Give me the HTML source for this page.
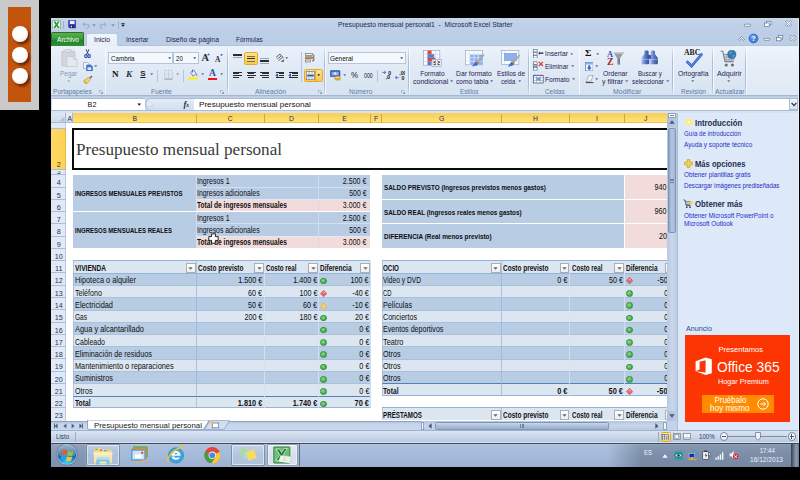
<!DOCTYPE html>
<html><head><meta charset="utf-8"><title>Presupuesto mensual personal1 - Microsoft Excel Starter</title>
<style>
html,body{margin:0;padding:0;background:#000;}
body{width:800px;height:480px;overflow:hidden;position:relative;font-family:"Liberation Sans",sans-serif;}
body div,body span,body svg{position:absolute;box-sizing:border-box;}
body span{white-space:pre;display:block;}
</style></head><body>
<div style="left:0.00px;top:0.00px;width:38.60px;height:110.00px;background:#cacaca"></div>
<div style="left:8.10px;top:7.00px;width:23.00px;height:94.80px;background:#c2540c"></div>
<div style="left:11.65px;top:26.05px;width:15.90px;height:15.90px;border-radius:50%;background:radial-gradient(circle at 42% 36%,#ffffff 0%,#fdfdfd 50%,#e4e4e4 85%,#d2d2d2 100%);box-shadow:2px 2.4px 2.4px rgba(50,10,0,.62)"></div>
<div style="left:11.65px;top:46.95px;width:15.90px;height:15.90px;border-radius:50%;background:radial-gradient(circle at 42% 36%,#ffffff 0%,#fdfdfd 50%,#e4e4e4 85%,#d2d2d2 100%);box-shadow:2px 2.4px 2.4px rgba(50,10,0,.62)"></div>
<div style="left:11.65px;top:67.85px;width:15.90px;height:15.90px;border-radius:50%;background:radial-gradient(circle at 42% 36%,#ffffff 0%,#fdfdfd 50%,#e4e4e4 85%,#d2d2d2 100%);box-shadow:2px 2.4px 2.4px rgba(50,10,0,.62)"></div>
<div style="left:51.00px;top:17.60px;width:749.00px;height:425.00px;background:#bfd0e8"></div>
<div style="left:51.00px;top:17.60px;width:749.00px;height:14.40px;background:linear-gradient(#c6d6ec,#bfd0e8 40%,#bdcee7)"></div>
<span style='left:337.50px;top:21.35px;font:7.30px/7.30px "Liberation Sans",sans-serif;color:#1e2a4a;transform:scaleX(0.9249);transform-origin:0 50%;'>Presupuesto mensual personal1  -  Microsoft Excel Starter</span>
<div style="left:51.00px;top:32.00px;width:749.00px;height:13.60px;background:#bccde6"></div>
<div style="left:51.00px;top:45.40px;width:749.00px;height:51.00px;background:linear-gradient(#ecf2fa 0%,#e3ecf7 30%,#dbe6f3 75%,#d8e3f1 100%);border-top:1px solid #b3c5de;border-bottom:1px solid #a3b6d2"></div>
<div style="left:51.00px;top:95.80px;width:749.00px;height:17.20px;background:#c9d9ee"></div>
<div style="left:51.00px;top:96.40px;width:749.00px;height:2.60px;background:linear-gradient(#b9c9e0,#ccd9ec)"></div>
<div style="left:52.00px;top:98.20px;width:93.00px;height:11.80px;background:#fff;border-top:0.8px solid #a8bcd8"></div>
<span style='left:87.60px;top:100.70px;font:7.20px/7.20px "Liberation Sans",sans-serif;color:#111;transform:scaleX(1.0000);transform-origin:50% 50%;'>B2</span>
<svg style="left:136.6px;top:103px" width="4.5" height="3" viewBox="0 0 6 4"><path d="M0.5 0.5h5L3 3.5z" fill="#111"/></svg>
<div style="left:145.00px;top:98.20px;width:49.00px;height:11.80px;background:linear-gradient(#e4ecf7,#d2dff0);border-top:1px solid #a8bcd8;border-left:1px solid #9db2d0;border-radius:6px 0 0 6px"></div>
<div style="left:148.00px;top:101.60px;width:5.00px;height:5.00px;border-radius:50%;background:radial-gradient(circle at 40% 40%,#f4f7fb,#b9c6da)"></div>
<span style='left:183.50px;top:99.90px;font:italic bold 8.60px/8.60px "Liberation Serif",serif;color:#1a2a4a;transform:scaleX(1.0000);transform-origin:0 50%;'>f</span>
<span style='left:186.30px;top:102.80px;font:italic bold 5.60px/5.60px "Liberation Serif",serif;color:#1a2a4a;transform:scaleX(1.0000);transform-origin:0 50%;'>x</span>
<div style="left:193.80px;top:98.20px;width:595.30px;height:11.80px;background:#fff;border-top:0.8px solid #a8bcd8"></div>
<span style='left:198.50px;top:100.50px;font:7.40px/7.40px "Liberation Sans",sans-serif;color:#111;transform:scaleX(1.0978);transform-origin:0 50%;'>Presupuesto mensual personal</span>
<div style="left:789.20px;top:98.20px;width:9.30px;height:11.80px;background:linear-gradient(#eef3fa,#d6e2f1);border:1px solid #a8bcd8"></div>
<svg style="left:791.2px;top:102.3px" width="6" height="5" viewBox="0 0 6 5"><path d="M0.6 0.8L3 3.6L5.4 0.8" fill="none" stroke="#333" stroke-width="1.3"/></svg>
<div style="left:51.00px;top:110.00px;width:749.00px;height:3.10px;background:linear-gradient(#a9bbd6 0,#a9bbd6 0.7px,#dbe5f3 0.9px,#d6e1f1 100%)"></div>
<div style="left:51.00px;top:113.00px;width:616.20px;height:307.60px;background:#fff"></div>
<div style="left:66.30px;top:113.00px;width:600.90px;height:9.60px;background:linear-gradient(#f9cf57 0%,#fbd55f 40%,#fde47a 100%);border-bottom:1px solid #f3c24a"></div>
<div style="left:51.00px;top:113.00px;width:15.30px;height:9.60px;background:linear-gradient(#dfe8f4,#cfdcee);border-right:1px solid #a5b9d4;border-bottom:1px solid #a5b9d4"></div>
<svg style="left:58px;top:115.5px" width="7" height="6" viewBox="0 0 7 6"><path d="M6.5 0.5V5.5H0.8z" fill="#b4c3d9"/></svg>
<div style="left:66.30px;top:113.00px;width:6.90px;height:9.60px;background:linear-gradient(#e6edf7,#d5e0f0);border-right:1px solid #a5b9d4;border-bottom:1px solid #a5b9d4"></div>
<span style='left:67.48px;top:115.50px;font:6.80px/6.80px "Liberation Sans",sans-serif;color:#27305a;transform:scaleX(1.0000);transform-origin:50% 50%;'>A</span>
<span style='left:132.46px;top:115.50px;font:6.80px/6.80px "Liberation Sans",sans-serif;color:#27305a;transform:scaleX(1.0000);transform-origin:50% 50%;'>B</span>
<div style="left:195.75px;top:113.50px;width:1.00px;height:9.00px;background:#d8a53a"></div>
<span style='left:227.87px;top:115.50px;font:6.80px/6.80px "Liberation Sans",sans-serif;color:#27305a;transform:scaleX(1.0000);transform-origin:50% 50%;'>C</span>
<div style="left:263.90px;top:113.50px;width:1.00px;height:9.00px;background:#d8a53a"></div>
<span style='left:288.99px;top:115.50px;font:6.80px/6.80px "Liberation Sans",sans-serif;color:#27305a;transform:scaleX(1.0000);transform-origin:50% 50%;'>D</span>
<div style="left:318.00px;top:113.50px;width:1.00px;height:9.00px;background:#d8a53a"></div>
<span style='left:342.18px;top:115.50px;font:6.80px/6.80px "Liberation Sans",sans-serif;color:#27305a;transform:scaleX(1.0000);transform-origin:50% 50%;'>E</span>
<div style="left:369.90px;top:113.50px;width:1.00px;height:9.00px;background:#d8a53a"></div>
<span style='left:374.07px;top:115.50px;font:6.80px/6.80px "Liberation Sans",sans-serif;color:#27305a;transform:scaleX(1.0000);transform-origin:50% 50%;'>F</span>
<div style="left:381.40px;top:113.50px;width:1.00px;height:9.00px;background:#d8a53a"></div>
<span style='left:438.93px;top:115.50px;font:6.80px/6.80px "Liberation Sans",sans-serif;color:#27305a;transform:scaleX(1.0000);transform-origin:50% 50%;'>G</span>
<div style="left:500.75px;top:113.50px;width:1.00px;height:9.00px;background:#d8a53a"></div>
<span style='left:532.97px;top:115.50px;font:6.80px/6.80px "Liberation Sans",sans-serif;color:#27305a;transform:scaleX(1.0000);transform-origin:50% 50%;'>H</span>
<div style="left:569.10px;top:113.50px;width:1.00px;height:9.00px;background:#d8a53a"></div>
<span style='left:596.06px;top:115.50px;font:6.80px/6.80px "Liberation Sans",sans-serif;color:#27305a;transform:scaleX(1.0000);transform-origin:50% 50%;'>I</span>
<div style="left:623.90px;top:113.50px;width:1.00px;height:9.00px;background:#d8a53a"></div>
<span style='left:644.10px;top:115.50px;font:6.80px/6.80px "Liberation Sans",sans-serif;color:#27305a;transform:scaleX(1.0000);transform-origin:50% 50%;'>J</span>
<div style="left:51.00px;top:122.60px;width:15.30px;height:298.00px;background:#e0e9f5;border-right:0.8px solid #bccbe1"></div>
<div style="left:51.00px;top:128.00px;width:15.30px;height:41.00px;background:linear-gradient(90deg,#ffd866,#fdd255);border-right:1px solid #e8b643"></div>
<span style='left:56.80px;top:161.00px;font:7.20px/7.20px "Liberation Sans",sans-serif;color:#3a3320;transform:scaleX(1.0000);transform-origin:50% 50%;'>2</span>
<div style="left:51.00px;top:127.60px;width:15.30px;height:0.80px;background:#aabdd8"></div>
<div style="left:51.00px;top:168.60px;width:15.30px;height:0.80px;background:#aabdd8"></div>
<div style="left:51.00px;top:174.30px;width:15.30px;height:0.80px;background:#aabdd8"></div>
<div style="left:51.00px;top:186.57px;width:15.30px;height:0.80px;background:#aabdd8"></div>
<div style="left:51.00px;top:198.84px;width:15.30px;height:0.80px;background:#aabdd8"></div>
<div style="left:51.00px;top:211.11px;width:15.30px;height:0.80px;background:#aabdd8"></div>
<div style="left:51.00px;top:223.38px;width:15.30px;height:0.80px;background:#aabdd8"></div>
<div style="left:51.00px;top:235.65px;width:15.30px;height:0.80px;background:#aabdd8"></div>
<div style="left:51.00px;top:247.92px;width:15.30px;height:0.80px;background:#aabdd8"></div>
<div style="left:51.00px;top:260.19px;width:15.30px;height:0.80px;background:#aabdd8"></div>
<div style="left:51.00px;top:272.46px;width:15.30px;height:0.80px;background:#aabdd8"></div>
<div style="left:51.00px;top:284.73px;width:15.30px;height:0.80px;background:#aabdd8"></div>
<div style="left:51.00px;top:297.00px;width:15.30px;height:0.80px;background:#aabdd8"></div>
<div style="left:51.00px;top:309.27px;width:15.30px;height:0.80px;background:#aabdd8"></div>
<div style="left:51.00px;top:321.54px;width:15.30px;height:0.80px;background:#aabdd8"></div>
<div style="left:51.00px;top:333.81px;width:15.30px;height:0.80px;background:#aabdd8"></div>
<div style="left:51.00px;top:346.08px;width:15.30px;height:0.80px;background:#aabdd8"></div>
<div style="left:51.00px;top:358.35px;width:15.30px;height:0.80px;background:#aabdd8"></div>
<div style="left:51.00px;top:370.62px;width:15.30px;height:0.80px;background:#aabdd8"></div>
<div style="left:51.00px;top:382.89px;width:15.30px;height:0.80px;background:#aabdd8"></div>
<div style="left:51.00px;top:395.16px;width:15.30px;height:0.80px;background:#aabdd8"></div>
<div style="left:51.00px;top:407.43px;width:15.30px;height:0.80px;background:#aabdd8"></div>
<span style='left:56.80px;top:168.00px;font:7.20px/7.20px "Liberation Sans",sans-serif;color:#23335e;transform:scaleX(1.0000);transform-origin:50% 50%;clip-path:inset(3.2px 0 0 0);'>3</span>
<span style='left:56.80px;top:179.30px;font:7.20px/7.20px "Liberation Sans",sans-serif;color:#23335e;transform:scaleX(1.0000);transform-origin:50% 50%;'>4</span>
<span style='left:56.80px;top:191.57px;font:7.20px/7.20px "Liberation Sans",sans-serif;color:#23335e;transform:scaleX(1.0000);transform-origin:50% 50%;'>5</span>
<span style='left:56.80px;top:203.84px;font:7.20px/7.20px "Liberation Sans",sans-serif;color:#23335e;transform:scaleX(1.0000);transform-origin:50% 50%;'>6</span>
<span style='left:56.80px;top:216.11px;font:7.20px/7.20px "Liberation Sans",sans-serif;color:#23335e;transform:scaleX(1.0000);transform-origin:50% 50%;'>7</span>
<span style='left:56.80px;top:228.38px;font:7.20px/7.20px "Liberation Sans",sans-serif;color:#23335e;transform:scaleX(1.0000);transform-origin:50% 50%;'>8</span>
<span style='left:56.80px;top:240.65px;font:7.20px/7.20px "Liberation Sans",sans-serif;color:#23335e;transform:scaleX(1.0000);transform-origin:50% 50%;'>9</span>
<span style='left:54.80px;top:252.92px;font:7.20px/7.20px "Liberation Sans",sans-serif;color:#23335e;transform:scaleX(1.0000);transform-origin:50% 50%;'>10</span>
<span style='left:55.06px;top:265.19px;font:7.20px/7.20px "Liberation Sans",sans-serif;color:#23335e;transform:scaleX(1.0000);transform-origin:50% 50%;'>11</span>
<span style='left:54.80px;top:277.46px;font:7.20px/7.20px "Liberation Sans",sans-serif;color:#23335e;transform:scaleX(1.0000);transform-origin:50% 50%;'>12</span>
<span style='left:54.80px;top:289.73px;font:7.20px/7.20px "Liberation Sans",sans-serif;color:#23335e;transform:scaleX(1.0000);transform-origin:50% 50%;'>13</span>
<span style='left:54.80px;top:302.00px;font:7.20px/7.20px "Liberation Sans",sans-serif;color:#23335e;transform:scaleX(1.0000);transform-origin:50% 50%;'>14</span>
<span style='left:54.80px;top:314.27px;font:7.20px/7.20px "Liberation Sans",sans-serif;color:#23335e;transform:scaleX(1.0000);transform-origin:50% 50%;'>15</span>
<span style='left:54.80px;top:326.54px;font:7.20px/7.20px "Liberation Sans",sans-serif;color:#23335e;transform:scaleX(1.0000);transform-origin:50% 50%;'>16</span>
<span style='left:54.80px;top:338.81px;font:7.20px/7.20px "Liberation Sans",sans-serif;color:#23335e;transform:scaleX(1.0000);transform-origin:50% 50%;'>17</span>
<span style='left:54.80px;top:351.08px;font:7.20px/7.20px "Liberation Sans",sans-serif;color:#23335e;transform:scaleX(1.0000);transform-origin:50% 50%;'>18</span>
<span style='left:54.80px;top:363.35px;font:7.20px/7.20px "Liberation Sans",sans-serif;color:#23335e;transform:scaleX(1.0000);transform-origin:50% 50%;'>19</span>
<span style='left:54.80px;top:375.62px;font:7.20px/7.20px "Liberation Sans",sans-serif;color:#23335e;transform:scaleX(1.0000);transform-origin:50% 50%;'>20</span>
<span style='left:54.80px;top:387.89px;font:7.20px/7.20px "Liberation Sans",sans-serif;color:#23335e;transform:scaleX(1.0000);transform-origin:50% 50%;'>21</span>
<span style='left:54.80px;top:400.16px;font:7.20px/7.20px "Liberation Sans",sans-serif;color:#23335e;transform:scaleX(1.0000);transform-origin:50% 50%;'>22</span>
<span style='left:54.80px;top:412.43px;font:7.20px/7.20px "Liberation Sans",sans-serif;color:#23335e;transform:scaleX(1.0000);transform-origin:50% 50%;'>23</span>
<div style="left:0;top:0;width:667.2px;height:420.6px;overflow:hidden">
<div style="left:72.20px;top:127.60px;width:598.00px;height:42.10px;background:#fff;border:2.1px solid #0a0a0a;border-right:none"></div>
<span style='left:76.30px;top:141.70px;font:15.80px/15.80px "Liberation Serif",serif;color:#3a3a3a;transform:scaleX(1.0817);transform-origin:0 50%;'>Presupuesto mensual personal</span>
<div style="left:73.20px;top:175.00px;width:297.20px;height:36.01px;background:#b8cce4"></div>
<div style="left:196.25px;top:199.54px;width:174.15px;height:11.37px;background:#f2dcdb"></div>
<div style="left:195.85px;top:175.00px;width:0.80px;height:36.00px;background:#d3def0"></div>
<div style="left:318.10px;top:175.00px;width:0.80px;height:36.00px;background:#cfdbee"></div>
<div style="left:196.25px;top:186.57px;width:174.15px;height:0.80px;background:#d3def0"></div>
<div style="left:196.25px;top:198.84px;width:174.15px;height:0.80px;background:#e4e6f0"></div>
<span style='left:74.60px;top:190.00px;font:bold 7.80px/7.80px "Liberation Sans",sans-serif;color:#0e0e0e;transform:scaleX(0.7735);transform-origin:0 50%;'>INGRESOS MENSUALES PREVISTOS</span>
<span style='left:197.40px;top:177.80px;font:8.20px/8.20px "Liberation Sans",sans-serif;color:#0e0e0e;transform:scaleX(0.8540);transform-origin:0 50%;'>Ingresos 1</span>
<span style='left:197.40px;top:190.07px;font:8.20px/8.20px "Liberation Sans",sans-serif;color:#0e0e0e;transform:scaleX(0.8387);transform-origin:0 50%;'>Ingresos adicionales</span>
<span style='left:197.40px;top:202.34px;font:bold 8.20px/8.20px "Liberation Sans",sans-serif;color:#0e0e0e;transform:scaleX(0.8039);transform-origin:0 50%;'>Total de ingresos mensuales</span>
<span style='left:338.94px;top:177.80px;font:8.20px/8.20px "Liberation Sans",sans-serif;color:#0e0e0e;transform:scaleX(0.8589);transform-origin:100% 50%;'>2.500 €</span>
<span style='left:345.78px;top:190.07px;font:8.20px/8.20px "Liberation Sans",sans-serif;color:#0e0e0e;transform:scaleX(0.8431);transform-origin:100% 50%;'>500 €</span>
<span style='left:338.94px;top:202.34px;font:8.20px/8.20px "Liberation Sans",sans-serif;color:#0e0e0e;transform:scaleX(0.8589);transform-origin:100% 50%;'>3.000 €</span>
<div style="left:73.20px;top:211.81px;width:297.20px;height:36.01px;background:#b8cce4"></div>
<div style="left:196.25px;top:236.35px;width:174.15px;height:11.37px;background:#f2dcdb"></div>
<div style="left:195.85px;top:211.81px;width:0.80px;height:36.00px;background:#d3def0"></div>
<div style="left:318.10px;top:211.81px;width:0.80px;height:36.00px;background:#cfdbee"></div>
<div style="left:196.25px;top:223.38px;width:174.15px;height:0.80px;background:#d3def0"></div>
<div style="left:196.25px;top:235.65px;width:174.15px;height:0.80px;background:#e4e6f0"></div>
<span style='left:74.60px;top:226.81px;font:bold 7.80px/7.80px "Liberation Sans",sans-serif;color:#0e0e0e;transform:scaleX(0.7691);transform-origin:0 50%;'>INGRESOS MENSUALES REALES</span>
<span style='left:197.40px;top:214.61px;font:8.20px/8.20px "Liberation Sans",sans-serif;color:#0e0e0e;transform:scaleX(0.8540);transform-origin:0 50%;'>Ingresos 1</span>
<span style='left:197.40px;top:226.88px;font:8.20px/8.20px "Liberation Sans",sans-serif;color:#0e0e0e;transform:scaleX(0.8387);transform-origin:0 50%;'>Ingresos adicionales</span>
<span style='left:197.40px;top:239.15px;font:bold 8.20px/8.20px "Liberation Sans",sans-serif;color:#0e0e0e;transform:scaleX(0.8039);transform-origin:0 50%;'>Total de ingresos mensuales</span>
<span style='left:338.94px;top:214.61px;font:8.20px/8.20px "Liberation Sans",sans-serif;color:#0e0e0e;transform:scaleX(0.8589);transform-origin:100% 50%;'>2.500 €</span>
<span style='left:345.78px;top:226.88px;font:8.20px/8.20px "Liberation Sans",sans-serif;color:#0e0e0e;transform:scaleX(0.8431);transform-origin:100% 50%;'>500 €</span>
<span style='left:338.94px;top:239.15px;font:8.20px/8.20px "Liberation Sans",sans-serif;color:#0e0e0e;transform:scaleX(0.8589);transform-origin:100% 50%;'>3.000 €</span>
<div style="left:381.90px;top:175.00px;width:242.10px;height:23.74px;background:#b8cce4"></div>
<div style="left:624.80px;top:175.00px;width:50.00px;height:23.74px;background:#f2dcdb"></div>
<span style='left:383.70px;top:183.97px;font:bold 7.80px/7.80px "Liberation Sans",sans-serif;color:#0e0e0e;transform:scaleX(0.8096);transform-origin:0 50%;'>SALDO PREVISTO (Ingresos previstos menos gastos)</span>
<span style='left:652.48px;top:183.77px;font:8.20px/8.20px "Liberation Sans",sans-serif;color:#0e0e0e;transform:scaleX(0.8800);transform-origin:100% 50%;'>940 €</span>
<div style="left:381.90px;top:199.54px;width:242.10px;height:23.74px;background:#b8cce4"></div>
<div style="left:624.80px;top:199.54px;width:50.00px;height:23.74px;background:#f2dcdb"></div>
<span style='left:383.70px;top:208.51px;font:bold 7.80px/7.80px "Liberation Sans",sans-serif;color:#0e0e0e;transform:scaleX(0.8105);transform-origin:0 50%;'>SALDO REAL (Ingresos reales menos gastos)</span>
<span style='left:652.48px;top:208.31px;font:8.20px/8.20px "Liberation Sans",sans-serif;color:#0e0e0e;transform:scaleX(0.8800);transform-origin:100% 50%;'>960 €</span>
<div style="left:381.90px;top:224.08px;width:242.10px;height:23.74px;background:#b8cce4"></div>
<div style="left:624.80px;top:224.08px;width:50.00px;height:23.74px;background:#f2dcdb"></div>
<span style='left:383.70px;top:233.05px;font:bold 7.80px/7.80px "Liberation Sans",sans-serif;color:#0e0e0e;transform:scaleX(0.8219);transform-origin:0 50%;'>DIFERENCIA (Real menos previsto)</span>
<span style='left:657.04px;top:232.85px;font:8.20px/8.20px "Liberation Sans",sans-serif;color:#0e0e0e;transform:scaleX(0.8800);transform-origin:100% 50%;'>20 €</span>
<div style="left:73.20px;top:260.09px;width:297.20px;height:12.77px;background:#dce6f1;border-top:0.8px solid #95b3d7"></div>
<div style="left:73.20px;top:272.86px;width:297.20px;height:12.27px;background:#b8cce4;border-top:0.8px solid #95b3d7"></div>
<div style="left:73.20px;top:285.13px;width:297.20px;height:12.27px;background:#dce6f1;border-top:0.8px solid #a9c0de"></div>
<div style="left:73.20px;top:297.40px;width:297.20px;height:12.27px;background:#b8cce4;border-top:0.8px solid #a9c0de"></div>
<div style="left:73.20px;top:309.67px;width:297.20px;height:12.27px;background:#dce6f1;border-top:0.8px solid #a9c0de"></div>
<div style="left:73.20px;top:321.94px;width:297.20px;height:12.27px;background:#b8cce4;border-top:0.8px solid #a9c0de"></div>
<div style="left:73.20px;top:334.21px;width:297.20px;height:12.27px;background:#dce6f1;border-top:0.8px solid #a9c0de"></div>
<div style="left:73.20px;top:346.48px;width:297.20px;height:12.27px;background:#b8cce4;border-top:0.8px solid #a9c0de"></div>
<div style="left:73.20px;top:358.75px;width:297.20px;height:12.27px;background:#dce6f1;border-top:0.8px solid #a9c0de"></div>
<div style="left:73.20px;top:371.02px;width:297.20px;height:12.27px;background:#b8cce4;border-top:0.8px solid #a9c0de"></div>
<div style="left:73.20px;top:383.29px;width:297.20px;height:12.27px;background:#dce6f1;border-top:0.8px solid #a9c0de"></div>
<div style="left:73.20px;top:395.56px;width:297.20px;height:12.27px;background:#dce6f1;border-top:1.3px solid #4f81bd;border-bottom:0.8px solid #95b3d7"></div>
<div style="left:195.85px;top:260.59px;width:0.80px;height:147.24px;background:#95b3d7;opacity:.7"></div>
<div style="left:264.00px;top:260.59px;width:0.80px;height:147.24px;background:#d6e2f1;opacity:.85"></div>
<div style="left:318.10px;top:260.59px;width:0.80px;height:147.24px;background:#d6e2f1;opacity:.85"></div>
<div style="left:72.80px;top:260.59px;width:0.80px;height:147.24px;background:#95b3d7;opacity:.6"></div>
<div style="left:370.00px;top:260.59px;width:0.80px;height:147.24px;background:#95b3d7;opacity:.45"></div>
<span style='left:74.60px;top:264.89px;font:bold 8.20px/8.20px "Liberation Sans",sans-serif;color:#111;transform:scaleX(0.8004);transform-origin:0 50%;'>VIVIENDA</span>
<span style='left:198.15px;top:264.89px;font:bold 8.20px/8.20px "Liberation Sans",sans-serif;color:#111;transform:scaleX(0.7926);transform-origin:0 50%;'>Costo previsto</span>
<span style='left:266.30px;top:264.89px;font:bold 8.20px/8.20px "Liberation Sans",sans-serif;color:#111;transform:scaleX(0.7606);transform-origin:0 50%;'>Costo real</span>
<span style='left:320.40px;top:264.89px;font:bold 8.20px/8.20px "Liberation Sans",sans-serif;color:#111;transform:scaleX(0.7969);transform-origin:0 50%;'>Diferencia</span>
<div style="left:186.15px;top:263.09px;width:9.40px;height:9.60px;background:linear-gradient(#ffffff,#eceef2);border:0.8px solid #a9aeb7"></div>
<svg style="left:188.35px;top:266.79px" width="5" height="3" viewBox="0 0 5 3"><path d="M0.3 0.3h4.4L2.5 2.7z" fill="#6a6a6a"/></svg>
<div style="left:254.30px;top:263.09px;width:9.40px;height:9.60px;background:linear-gradient(#ffffff,#eceef2);border:0.8px solid #a9aeb7"></div>
<svg style="left:256.50px;top:266.79px" width="5" height="3" viewBox="0 0 5 3"><path d="M0.3 0.3h4.4L2.5 2.7z" fill="#6a6a6a"/></svg>
<div style="left:308.40px;top:263.09px;width:9.40px;height:9.60px;background:linear-gradient(#ffffff,#eceef2);border:0.8px solid #a9aeb7"></div>
<svg style="left:310.60px;top:266.79px" width="5" height="3" viewBox="0 0 5 3"><path d="M0.3 0.3h4.4L2.5 2.7z" fill="#6a6a6a"/></svg>
<div style="left:360.30px;top:263.09px;width:9.40px;height:9.60px;background:linear-gradient(#ffffff,#eceef2);border:0.8px solid #a9aeb7"></div>
<svg style="left:362.50px;top:266.79px" width="5" height="3" viewBox="0 0 5 3"><path d="M0.3 0.3h4.4L2.5 2.7z" fill="#6a6a6a"/></svg>
<span style='left:74.60px;top:277.26px;font:8.20px/8.20px "Liberation Sans",sans-serif;color:#0e0e0e;transform:scaleX(0.8981);transform-origin:0 50%;'>Hipoteca o alquiler</span>
<span style='left:235.04px;top:277.26px;font:8.20px/8.20px "Liberation Sans",sans-serif;color:#0e0e0e;transform:scaleX(0.8800);transform-origin:100% 50%;'>1.500 €</span>
<span style='left:289.74px;top:277.26px;font:8.20px/8.20px "Liberation Sans",sans-serif;color:#0e0e0e;transform:scaleX(0.8800);transform-origin:100% 50%;'>1.400 €</span>
<div style="left:320.20px;top:277.76px;width:6.60px;height:6.60px;border-radius:50%;background:radial-gradient(circle at 40% 35%,#8fdc8a,#3fae46 70%,#2f8f38);border:0.6px solid #3c8c40"></div>
<span style='left:348.48px;top:277.26px;font:8.20px/8.20px "Liberation Sans",sans-serif;color:#0e0e0e;transform:scaleX(0.8800);transform-origin:100% 50%;'>100 €</span>
<span style='left:74.60px;top:289.53px;font:8.20px/8.20px "Liberation Sans",sans-serif;color:#0e0e0e;transform:scaleX(0.8709);transform-origin:0 50%;'>Teléfono</span>
<span style='left:246.44px;top:289.53px;font:8.20px/8.20px "Liberation Sans",sans-serif;color:#0e0e0e;transform:scaleX(0.8800);transform-origin:100% 50%;'>60 €</span>
<span style='left:296.58px;top:289.53px;font:8.20px/8.20px "Liberation Sans",sans-serif;color:#0e0e0e;transform:scaleX(0.8800);transform-origin:100% 50%;'>100 €</span>
<svg style="left:319.90px;top:289.73px" width="7.2" height="7.2" viewBox="0 0 8 8"><path d="M4 0.4L7.6 4L4 7.6L0.4 4z" fill="#ea5f68" stroke="#c0444e" stroke-width="0.6"/><path d="M4 1.5L6 3.5H2z" fill="#f6a6ab"/></svg>
<span style='left:350.31px;top:289.53px;font:8.20px/8.20px "Liberation Sans",sans-serif;color:#0e0e0e;transform:scaleX(0.8800);transform-origin:100% 50%;'>-40 €</span>
<span style='left:74.60px;top:301.80px;font:8.20px/8.20px "Liberation Sans",sans-serif;color:#0e0e0e;transform:scaleX(0.8965);transform-origin:0 50%;'>Electricidad</span>
<span style='left:246.44px;top:301.80px;font:8.20px/8.20px "Liberation Sans",sans-serif;color:#0e0e0e;transform:scaleX(0.8800);transform-origin:100% 50%;'>50 €</span>
<span style='left:301.14px;top:301.80px;font:8.20px/8.20px "Liberation Sans",sans-serif;color:#0e0e0e;transform:scaleX(0.8800);transform-origin:100% 50%;'>60 €</span>
<svg style="left:320.00px;top:301.70px" width="7" height="7" viewBox="0 0 8 8"><path d="M4 0.8L7.5 7H0.5z" fill="#fcd658" stroke="#e0ae2c" stroke-width="0.7"/></svg>
<span style='left:350.31px;top:301.80px;font:8.20px/8.20px "Liberation Sans",sans-serif;color:#0e0e0e;transform:scaleX(0.8800);transform-origin:100% 50%;'>-10 €</span>
<span style='left:74.60px;top:314.07px;font:8.20px/8.20px "Liberation Sans",sans-serif;color:#0e0e0e;transform:scaleX(0.7979);transform-origin:0 50%;'>Gas</span>
<span style='left:241.88px;top:314.07px;font:8.20px/8.20px "Liberation Sans",sans-serif;color:#0e0e0e;transform:scaleX(0.8800);transform-origin:100% 50%;'>200 €</span>
<span style='left:296.58px;top:314.07px;font:8.20px/8.20px "Liberation Sans",sans-serif;color:#0e0e0e;transform:scaleX(0.8800);transform-origin:100% 50%;'>180 €</span>
<div style="left:320.20px;top:314.57px;width:6.60px;height:6.60px;border-radius:50%;background:radial-gradient(circle at 40% 35%,#8fdc8a,#3fae46 70%,#2f8f38);border:0.6px solid #3c8c40"></div>
<span style='left:353.04px;top:314.07px;font:8.20px/8.20px "Liberation Sans",sans-serif;color:#0e0e0e;transform:scaleX(0.8800);transform-origin:100% 50%;'>20 €</span>
<span style='left:74.60px;top:326.34px;font:8.20px/8.20px "Liberation Sans",sans-serif;color:#0e0e0e;transform:scaleX(0.9064);transform-origin:0 50%;'>Agua y alcantarillado</span>
<div style="left:320.20px;top:326.84px;width:6.60px;height:6.60px;border-radius:50%;background:radial-gradient(circle at 40% 35%,#8fdc8a,#3fae46 70%,#2f8f38);border:0.6px solid #3c8c40"></div>
<span style='left:357.60px;top:326.34px;font:8.20px/8.20px "Liberation Sans",sans-serif;color:#0e0e0e;transform:scaleX(0.8800);transform-origin:100% 50%;'>0 €</span>
<span style='left:74.60px;top:338.61px;font:8.20px/8.20px "Liberation Sans",sans-serif;color:#0e0e0e;transform:scaleX(0.8545);transform-origin:0 50%;'>Cableado</span>
<div style="left:320.20px;top:339.11px;width:6.60px;height:6.60px;border-radius:50%;background:radial-gradient(circle at 40% 35%,#8fdc8a,#3fae46 70%,#2f8f38);border:0.6px solid #3c8c40"></div>
<span style='left:357.60px;top:338.61px;font:8.20px/8.20px "Liberation Sans",sans-serif;color:#0e0e0e;transform:scaleX(0.8800);transform-origin:100% 50%;'>0 €</span>
<span style='left:74.60px;top:350.88px;font:8.20px/8.20px "Liberation Sans",sans-serif;color:#0e0e0e;transform:scaleX(0.8891);transform-origin:0 50%;'>Eliminación de residuos</span>
<div style="left:320.20px;top:351.38px;width:6.60px;height:6.60px;border-radius:50%;background:radial-gradient(circle at 40% 35%,#8fdc8a,#3fae46 70%,#2f8f38);border:0.6px solid #3c8c40"></div>
<span style='left:357.60px;top:350.88px;font:8.20px/8.20px "Liberation Sans",sans-serif;color:#0e0e0e;transform:scaleX(0.8800);transform-origin:100% 50%;'>0 €</span>
<span style='left:74.60px;top:363.15px;font:8.20px/8.20px "Liberation Sans",sans-serif;color:#0e0e0e;transform:scaleX(0.8947);transform-origin:0 50%;'>Mantenimiento o reparaciones</span>
<div style="left:320.20px;top:363.65px;width:6.60px;height:6.60px;border-radius:50%;background:radial-gradient(circle at 40% 35%,#8fdc8a,#3fae46 70%,#2f8f38);border:0.6px solid #3c8c40"></div>
<span style='left:357.60px;top:363.15px;font:8.20px/8.20px "Liberation Sans",sans-serif;color:#0e0e0e;transform:scaleX(0.8800);transform-origin:100% 50%;'>0 €</span>
<span style='left:74.60px;top:375.42px;font:8.20px/8.20px "Liberation Sans",sans-serif;color:#0e0e0e;transform:scaleX(0.8871);transform-origin:0 50%;'>Suministros</span>
<div style="left:320.20px;top:375.92px;width:6.60px;height:6.60px;border-radius:50%;background:radial-gradient(circle at 40% 35%,#8fdc8a,#3fae46 70%,#2f8f38);border:0.6px solid #3c8c40"></div>
<span style='left:357.60px;top:375.42px;font:8.20px/8.20px "Liberation Sans",sans-serif;color:#0e0e0e;transform:scaleX(0.8800);transform-origin:100% 50%;'>0 €</span>
<span style='left:74.60px;top:387.69px;font:8.20px/8.20px "Liberation Sans",sans-serif;color:#0e0e0e;transform:scaleX(0.8729);transform-origin:0 50%;'>Otros</span>
<div style="left:320.20px;top:388.19px;width:6.60px;height:6.60px;border-radius:50%;background:radial-gradient(circle at 40% 35%,#8fdc8a,#3fae46 70%,#2f8f38);border:0.6px solid #3c8c40"></div>
<span style='left:357.60px;top:387.69px;font:8.20px/8.20px "Liberation Sans",sans-serif;color:#0e0e0e;transform:scaleX(0.8800);transform-origin:100% 50%;'>0 €</span>
<span style='left:74.60px;top:400.06px;font:bold 8.20px/8.20px "Liberation Sans",sans-serif;color:#111;transform:scaleX(0.8220);transform-origin:0 50%;'>Total</span>
<span style='left:235.04px;top:400.06px;font:bold 8.20px/8.20px "Liberation Sans",sans-serif;color:#111;transform:scaleX(0.9000);transform-origin:100% 50%;'>1.810 €</span>
<span style='left:289.74px;top:400.06px;font:bold 8.20px/8.20px "Liberation Sans",sans-serif;color:#111;transform:scaleX(0.9000);transform-origin:100% 50%;'>1.740 €</span>
<div style="left:320.20px;top:400.56px;width:6.60px;height:6.60px;border-radius:50%;background:radial-gradient(circle at 40% 35%,#8fdc8a,#3fae46 70%,#2f8f38);border:0.6px solid #3c8c40"></div>
<span style='left:353.04px;top:400.06px;font:bold 8.20px/8.20px "Liberation Sans",sans-serif;color:#111;transform:scaleX(0.9000);transform-origin:100% 50%;'>70 €</span>
<div style="left:381.90px;top:260.09px;width:295.30px;height:12.77px;background:#dce6f1;border-top:0.8px solid #95b3d7"></div>
<div style="left:381.90px;top:272.86px;width:295.30px;height:12.27px;background:#b8cce4;border-top:0.8px solid #95b3d7"></div>
<div style="left:381.90px;top:285.13px;width:295.30px;height:12.27px;background:#dce6f1;border-top:0.8px solid #a9c0de"></div>
<div style="left:381.90px;top:297.40px;width:295.30px;height:12.27px;background:#b8cce4;border-top:0.8px solid #a9c0de"></div>
<div style="left:381.90px;top:309.67px;width:295.30px;height:12.27px;background:#dce6f1;border-top:0.8px solid #a9c0de"></div>
<div style="left:381.90px;top:321.94px;width:295.30px;height:12.27px;background:#b8cce4;border-top:0.8px solid #a9c0de"></div>
<div style="left:381.90px;top:334.21px;width:295.30px;height:12.27px;background:#dce6f1;border-top:0.8px solid #a9c0de"></div>
<div style="left:381.90px;top:346.48px;width:295.30px;height:12.27px;background:#b8cce4;border-top:0.8px solid #a9c0de"></div>
<div style="left:381.90px;top:358.75px;width:295.30px;height:12.27px;background:#dce6f1;border-top:0.8px solid #a9c0de"></div>
<div style="left:381.90px;top:371.02px;width:295.30px;height:12.27px;background:#b8cce4;border-top:0.8px solid #a9c0de"></div>
<div style="left:381.90px;top:383.29px;width:295.30px;height:12.27px;background:#dce6f1;border-top:1.3px solid #4f81bd;border-bottom:0.8px solid #95b3d7"></div>
<div style="left:500.85px;top:260.59px;width:0.80px;height:134.97px;background:#95b3d7;opacity:.7"></div>
<div style="left:569.20px;top:260.59px;width:0.80px;height:134.97px;background:#d6e2f1;opacity:.85"></div>
<div style="left:624.00px;top:260.59px;width:0.80px;height:134.97px;background:#d6e2f1;opacity:.85"></div>
<div style="left:381.50px;top:260.59px;width:0.80px;height:134.97px;background:#95b3d7;opacity:.6"></div>
<span style='left:383.30px;top:264.89px;font:bold 8.20px/8.20px "Liberation Sans",sans-serif;color:#111;transform:scaleX(0.7635);transform-origin:0 50%;'>OCIO</span>
<span style='left:503.15px;top:264.89px;font:bold 8.20px/8.20px "Liberation Sans",sans-serif;color:#111;transform:scaleX(0.7926);transform-origin:0 50%;'>Costo previsto</span>
<span style='left:571.50px;top:264.89px;font:bold 8.20px/8.20px "Liberation Sans",sans-serif;color:#111;transform:scaleX(0.7606);transform-origin:0 50%;'>Costo real</span>
<span style='left:626.30px;top:264.89px;font:bold 8.20px/8.20px "Liberation Sans",sans-serif;color:#111;transform:scaleX(0.7969);transform-origin:0 50%;'>Diferencia</span>
<div style="left:491.15px;top:263.09px;width:9.40px;height:9.60px;background:linear-gradient(#ffffff,#eceef2);border:0.8px solid #a9aeb7"></div>
<svg style="left:493.35px;top:266.79px" width="5" height="3" viewBox="0 0 5 3"><path d="M0.3 0.3h4.4L2.5 2.7z" fill="#6a6a6a"/></svg>
<div style="left:559.50px;top:263.09px;width:9.40px;height:9.60px;background:linear-gradient(#ffffff,#eceef2);border:0.8px solid #a9aeb7"></div>
<svg style="left:561.70px;top:266.79px" width="5" height="3" viewBox="0 0 5 3"><path d="M0.3 0.3h4.4L2.5 2.7z" fill="#6a6a6a"/></svg>
<div style="left:614.30px;top:263.09px;width:9.40px;height:9.60px;background:linear-gradient(#ffffff,#eceef2);border:0.8px solid #a9aeb7"></div>
<svg style="left:616.50px;top:266.79px" width="5" height="3" viewBox="0 0 5 3"><path d="M0.3 0.3h4.4L2.5 2.7z" fill="#6a6a6a"/></svg>
<div style="left:664.70px;top:263.09px;width:9.40px;height:9.60px;background:linear-gradient(#ffffff,#eceef2);border:0.8px solid #a9aeb7"></div>
<svg style="left:666.90px;top:266.79px" width="5" height="3" viewBox="0 0 5 3"><path d="M0.3 0.3h4.4L2.5 2.7z" fill="#6a6a6a"/></svg>
<span style='left:383.30px;top:277.26px;font:8.20px/8.20px "Liberation Sans",sans-serif;color:#0e0e0e;transform:scaleX(0.8121);transform-origin:0 50%;'>Video y DVD</span>
<span style='left:556.20px;top:277.26px;font:8.20px/8.20px "Liberation Sans",sans-serif;color:#0e0e0e;transform:scaleX(0.8800);transform-origin:100% 50%;'>0 €</span>
<span style='left:607.04px;top:277.26px;font:8.20px/8.20px "Liberation Sans",sans-serif;color:#0e0e0e;transform:scaleX(0.8800);transform-origin:100% 50%;'>50 €</span>
<svg style="left:625.80px;top:277.46px" width="7.2" height="7.2" viewBox="0 0 8 8"><path d="M4 0.4L7.6 4L4 7.6L0.4 4z" fill="#ea5f68" stroke="#c0444e" stroke-width="0.6"/><path d="M4 1.5L6 3.5H2z" fill="#f6a6ab"/></svg>
<span style='left:655.31px;top:277.26px;font:8.20px/8.20px "Liberation Sans",sans-serif;color:#0e0e0e;transform:scaleX(0.8800);transform-origin:100% 50%;'>-50 €</span>
<span style='left:383.30px;top:289.53px;font:8.20px/8.20px "Liberation Sans",sans-serif;color:#0e0e0e;transform:scaleX(0.7177);transform-origin:0 50%;'>CD</span>
<div style="left:626.10px;top:290.03px;width:6.60px;height:6.60px;border-radius:50%;background:radial-gradient(circle at 40% 35%,#8fdc8a,#3fae46 70%,#2f8f38);border:0.6px solid #3c8c40"></div>
<span style='left:662.60px;top:289.53px;font:8.20px/8.20px "Liberation Sans",sans-serif;color:#0e0e0e;transform:scaleX(0.8800);transform-origin:100% 50%;'>0 €</span>
<span style='left:383.30px;top:301.80px;font:8.20px/8.20px "Liberation Sans",sans-serif;color:#0e0e0e;transform:scaleX(0.8716);transform-origin:0 50%;'>Películas</span>
<div style="left:626.10px;top:302.30px;width:6.60px;height:6.60px;border-radius:50%;background:radial-gradient(circle at 40% 35%,#8fdc8a,#3fae46 70%,#2f8f38);border:0.6px solid #3c8c40"></div>
<span style='left:662.60px;top:301.80px;font:8.20px/8.20px "Liberation Sans",sans-serif;color:#0e0e0e;transform:scaleX(0.8800);transform-origin:100% 50%;'>0 €</span>
<span style='left:383.30px;top:314.07px;font:8.20px/8.20px "Liberation Sans",sans-serif;color:#0e0e0e;transform:scaleX(0.8674);transform-origin:0 50%;'>Conciertos</span>
<div style="left:626.10px;top:314.57px;width:6.60px;height:6.60px;border-radius:50%;background:radial-gradient(circle at 40% 35%,#8fdc8a,#3fae46 70%,#2f8f38);border:0.6px solid #3c8c40"></div>
<span style='left:662.60px;top:314.07px;font:8.20px/8.20px "Liberation Sans",sans-serif;color:#0e0e0e;transform:scaleX(0.8800);transform-origin:100% 50%;'>0 €</span>
<span style='left:383.30px;top:326.34px;font:8.20px/8.20px "Liberation Sans",sans-serif;color:#0e0e0e;transform:scaleX(0.8675);transform-origin:0 50%;'>Eventos deportivos</span>
<div style="left:626.10px;top:326.84px;width:6.60px;height:6.60px;border-radius:50%;background:radial-gradient(circle at 40% 35%,#8fdc8a,#3fae46 70%,#2f8f38);border:0.6px solid #3c8c40"></div>
<span style='left:662.60px;top:326.34px;font:8.20px/8.20px "Liberation Sans",sans-serif;color:#0e0e0e;transform:scaleX(0.8800);transform-origin:100% 50%;'>0 €</span>
<span style='left:383.30px;top:338.61px;font:8.20px/8.20px "Liberation Sans",sans-serif;color:#0e0e0e;transform:scaleX(0.8995);transform-origin:0 50%;'>Teatro</span>
<div style="left:626.10px;top:339.11px;width:6.60px;height:6.60px;border-radius:50%;background:radial-gradient(circle at 40% 35%,#8fdc8a,#3fae46 70%,#2f8f38);border:0.6px solid #3c8c40"></div>
<span style='left:662.60px;top:338.61px;font:8.20px/8.20px "Liberation Sans",sans-serif;color:#0e0e0e;transform:scaleX(0.8800);transform-origin:100% 50%;'>0 €</span>
<span style='left:383.30px;top:350.88px;font:8.20px/8.20px "Liberation Sans",sans-serif;color:#0e0e0e;transform:scaleX(0.8729);transform-origin:0 50%;'>Otros</span>
<div style="left:626.10px;top:351.38px;width:6.60px;height:6.60px;border-radius:50%;background:radial-gradient(circle at 40% 35%,#8fdc8a,#3fae46 70%,#2f8f38);border:0.6px solid #3c8c40"></div>
<span style='left:662.60px;top:350.88px;font:8.20px/8.20px "Liberation Sans",sans-serif;color:#0e0e0e;transform:scaleX(0.8800);transform-origin:100% 50%;'>0 €</span>
<span style='left:383.30px;top:363.15px;font:8.20px/8.20px "Liberation Sans",sans-serif;color:#0e0e0e;transform:scaleX(0.8729);transform-origin:0 50%;'>Otros</span>
<div style="left:626.10px;top:363.65px;width:6.60px;height:6.60px;border-radius:50%;background:radial-gradient(circle at 40% 35%,#8fdc8a,#3fae46 70%,#2f8f38);border:0.6px solid #3c8c40"></div>
<span style='left:662.60px;top:363.15px;font:8.20px/8.20px "Liberation Sans",sans-serif;color:#0e0e0e;transform:scaleX(0.8800);transform-origin:100% 50%;'>0 €</span>
<span style='left:383.30px;top:375.42px;font:8.20px/8.20px "Liberation Sans",sans-serif;color:#0e0e0e;transform:scaleX(0.8729);transform-origin:0 50%;'>Otros</span>
<div style="left:626.10px;top:375.92px;width:6.60px;height:6.60px;border-radius:50%;background:radial-gradient(circle at 40% 35%,#8fdc8a,#3fae46 70%,#2f8f38);border:0.6px solid #3c8c40"></div>
<span style='left:662.60px;top:375.42px;font:8.20px/8.20px "Liberation Sans",sans-serif;color:#0e0e0e;transform:scaleX(0.8800);transform-origin:100% 50%;'>0 €</span>
<span style='left:383.30px;top:387.79px;font:bold 8.20px/8.20px "Liberation Sans",sans-serif;color:#111;transform:scaleX(0.8220);transform-origin:0 50%;'>Total</span>
<span style='left:556.20px;top:387.79px;font:bold 8.20px/8.20px "Liberation Sans",sans-serif;color:#111;transform:scaleX(0.9000);transform-origin:100% 50%;'>0 €</span>
<span style='left:607.04px;top:387.79px;font:bold 8.20px/8.20px "Liberation Sans",sans-serif;color:#111;transform:scaleX(0.9000);transform-origin:100% 50%;'>50 €</span>
<svg style="left:625.80px;top:387.99px" width="7.2" height="7.2" viewBox="0 0 8 8"><path d="M4 0.4L7.6 4L4 7.6L0.4 4z" fill="#ea5f68" stroke="#c0444e" stroke-width="0.6"/><path d="M4 1.5L6 3.5H2z" fill="#f6a6ab"/></svg>
<span style='left:655.31px;top:387.79px;font:bold 8.20px/8.20px "Liberation Sans",sans-serif;color:#111;transform:scaleX(0.9000);transform-origin:100% 50%;'>-50 €</span>
<div style="left:381.90px;top:407.33px;width:295.30px;height:12.77px;background:#dce6f1;border-top:0.8px solid #95b3d7"></div>
<div style="left:500.85px;top:407.83px;width:0.80px;height:12.27px;background:#95b3d7;opacity:.7"></div>
<div style="left:569.20px;top:407.83px;width:0.80px;height:12.27px;background:#d6e2f1;opacity:.85"></div>
<div style="left:624.00px;top:407.83px;width:0.80px;height:12.27px;background:#d6e2f1;opacity:.85"></div>
<div style="left:381.50px;top:407.83px;width:0.80px;height:12.27px;background:#95b3d7;opacity:.6"></div>
<span style='left:383.30px;top:412.13px;font:bold 8.20px/8.20px "Liberation Sans",sans-serif;color:#111;transform:scaleX(0.7598);transform-origin:0 50%;'>PRÉSTAMOS</span>
<span style='left:503.15px;top:412.13px;font:bold 8.20px/8.20px "Liberation Sans",sans-serif;color:#111;transform:scaleX(0.7926);transform-origin:0 50%;'>Costo previsto</span>
<span style='left:571.50px;top:412.13px;font:bold 8.20px/8.20px "Liberation Sans",sans-serif;color:#111;transform:scaleX(0.7606);transform-origin:0 50%;'>Costo real</span>
<span style='left:626.30px;top:412.13px;font:bold 8.20px/8.20px "Liberation Sans",sans-serif;color:#111;transform:scaleX(0.7969);transform-origin:0 50%;'>Diferencia</span>
<div style="left:491.15px;top:410.33px;width:9.40px;height:9.60px;background:linear-gradient(#ffffff,#eceef2);border:0.8px solid #a9aeb7"></div>
<svg style="left:493.35px;top:414.03px" width="5" height="3" viewBox="0 0 5 3"><path d="M0.3 0.3h4.4L2.5 2.7z" fill="#6a6a6a"/></svg>
<div style="left:559.50px;top:410.33px;width:9.40px;height:9.60px;background:linear-gradient(#ffffff,#eceef2);border:0.8px solid #a9aeb7"></div>
<svg style="left:561.70px;top:414.03px" width="5" height="3" viewBox="0 0 5 3"><path d="M0.3 0.3h4.4L2.5 2.7z" fill="#6a6a6a"/></svg>
<div style="left:614.30px;top:410.33px;width:9.40px;height:9.60px;background:linear-gradient(#ffffff,#eceef2);border:0.8px solid #a9aeb7"></div>
<svg style="left:616.50px;top:414.03px" width="5" height="3" viewBox="0 0 5 3"><path d="M0.3 0.3h4.4L2.5 2.7z" fill="#6a6a6a"/></svg>
<div style="left:664.70px;top:410.33px;width:9.40px;height:9.60px;background:linear-gradient(#ffffff,#eceef2);border:0.8px solid #a9aeb7"></div>
<svg style="left:666.90px;top:414.03px" width="5" height="3" viewBox="0 0 5 3"><path d="M0.3 0.3h4.4L2.5 2.7z" fill="#6a6a6a"/></svg>
<svg style="left:207.5px;top:232.5px" width="11" height="11" viewBox="0 0 11 11"><path d="M3.6 0.8h3.8v2.8h2.8v3.8H7.4v2.8H3.6V7.4H0.8V3.6h2.8z" fill="#fff" stroke="#111" stroke-width="0.9"/></svg>
</div>
<div style="left:667.20px;top:113.00px;width:9.50px;height:307.60px;background:linear-gradient(90deg,#b9c9e1,#c9d7ea 50%,#bccbe2)"></div>
<div style="left:667.80px;top:113.30px;width:8.30px;height:4.60px;background:#f4f7fb;border:0.8px solid #8fa3c2"></div>
<div style="left:669.60px;top:115.20px;width:4.80px;height:0.90px;background:#7f8fa8"></div>
<div style="left:667.20px;top:118.20px;width:9.50px;height:8.80px;background:linear-gradient(90deg,#aebfda,#bccbe3)"></div>
<svg style="left:669.3px;top:120.3px" width="6" height="4" viewBox="0 0 6 4"><path d="M3 0.3L5.8 3.7H0.2z" fill="#4a5a78"/></svg>
<div style="left:667.60px;top:127.80px;width:8.40px;height:105.40px;background:linear-gradient(90deg,#8fa5c6,#b5c6df 45%,#a3b6d3);border:0.8px solid #7f95b6;border-radius:1.5px"></div>
<div style="left:669.60px;top:178.70px;width:4.60px;height:0.70px;background:#6f83a3"></div>
<div style="left:669.60px;top:180.30px;width:4.60px;height:0.70px;background:#6f83a3"></div>
<div style="left:669.60px;top:181.90px;width:4.60px;height:0.70px;background:#6f83a3"></div>
<div style="left:667.20px;top:411.30px;width:9.50px;height:9.30px;background:linear-gradient(90deg,#aebfda,#bccbe3)"></div>
<svg style="left:669.3px;top:414.3px" width="6" height="4" viewBox="0 0 6 4"><path d="M3 3.7L5.8 0.3H0.2z" fill="#4a5a78"/></svg>
<div style="left:51.00px;top:420.60px;width:625.70px;height:9.60px;background:linear-gradient(#b5c6df,#c6d5ea 30%,#c9d8ec);border-top:0.8px solid #8ea4c6"></div>
<svg style="left:53.30px;top:422.6px" width="6" height="6" viewBox="0 0 6 6"><path d="M4.6 0.6V5.4L1.6 3z M1 0.6h0.9v4.8H1z" fill="#4d6185"/></svg>
<svg style="left:61.60px;top:422.6px" width="6" height="6" viewBox="0 0 6 6"><path d="M4.4 0.6V5.4L1.4 3z" fill="#4d6185"/></svg>
<svg style="left:70.00px;top:422.6px" width="6" height="6" viewBox="0 0 6 6"><path d="M1.6 0.6V5.4L4.6 3z" fill="#4d6185"/></svg>
<svg style="left:78.40px;top:422.6px" width="6" height="6" viewBox="0 0 6 6"><path d="M1.4 0.6V5.4L4.4 3z M4.1 0.6h0.9v4.8h-0.9z" fill="#4d6185"/></svg>
<svg style="left:86px;top:420.4px" width="150" height="10" viewBox="0 0 150 10"><path d="M1.5 0V8.2Q1.5 9.4 2.8 9.4H117.5L123.3 0z" fill="#fff" stroke="#7f95b6" stroke-width="0.8"/><path d="M118.6 9.4L124.3 0.6H143.6L138 9.4z" fill="#d3dff0" stroke="#8ea4c6" stroke-width="0.8"/><rect x="126.3" y="3" width="6.4" height="4.8" fill="#fff" stroke="#5b6f92" stroke-width="0.7"/><circle cx="126" cy="2.8" r="1.5" fill="#f5b936"/></svg>
<span style='left:93.80px;top:421.70px;font:7.60px/7.60px "Liberation Sans",sans-serif;color:#151515;transform:scaleX(1.0308);transform-origin:0 50%;'>Presupuesto mensual personal</span>
<div style="left:420.60px;top:421.20px;width:246.60px;height:9.00px;background:linear-gradient(#b3c4de,#c8d6ea 50%,#bccbe2)"></div>
<div style="left:421.20px;top:421.80px;width:2.60px;height:8.00px;background:#f4f7fb;border:0.7px solid #8fa3c2"></div>
<svg style="left:427.5px;top:423.2px" width="4" height="6" viewBox="0 0 4 6"><path d="M0.3 3L3.7 0.2V5.8z" fill="#4a5a78"/></svg>
<div style="left:435.00px;top:421.60px;width:173.80px;height:8.20px;background:linear-gradient(#c9d7ea,#a9bcd8 55%,#9db1cf);border:0.8px solid #7f95b6;border-radius:1.5px"></div>
<div style="left:520.00px;top:423.60px;width:0.70px;height:4.40px;background:#6f83a3"></div>
<div style="left:521.50px;top:423.60px;width:0.70px;height:4.40px;background:#6f83a3"></div>
<div style="left:523.00px;top:423.60px;width:0.70px;height:4.40px;background:#6f83a3"></div>
<svg style="left:655.3px;top:423.2px" width="4" height="6" viewBox="0 0 4 6"><path d="M3.7 3L0.3 0.2V5.8z" fill="#4a5a78"/></svg>
<div style="left:663.20px;top:421.60px;width:3.60px;height:8.40px;background:#f4f7fb;border:0.7px solid #8fa3c2"></div>
<div style="left:667.20px;top:420.60px;width:9.50px;height:9.60px;background:#c3d3e9"></div>
<div style="left:51.00px;top:430.00px;width:748.00px;height:13.30px;background:linear-gradient(#d9e4f3 0%,#cbd8eb 50%,#b8c8df 100%);border-top:0.7px solid #9fb2cf;border-bottom:0.7px solid #dbe4f0"></div>
<div style="left:51.00px;top:443.10px;width:748.00px;height:0.90px;background:#3f4858"></div>
<span style='left:56.00px;top:434.20px;font:6.80px/6.80px "Liberation Sans",sans-serif;color:#2a3a66;transform:scaleX(0.9190);transform-origin:0 50%;'>Listo</span>
<div style="left:75.00px;top:432.00px;width:0.80px;height:9.50px;background:#9aaecb"></div>
<div style="left:658.30px;top:432.00px;width:0.80px;height:9.50px;background:#9aaecb"></div>
<div style="left:660.60px;top:431.60px;width:10.40px;height:10.40px;background:linear-gradient(#fde9a0,#fbd25a);border:0.9px solid #e0a92e;border-radius:1.5px"></div>
<svg style="left:662.4px;top:433.6px" width="7" height="6.4" viewBox="0 0 7 6.4"><rect x="0.3" y="0.3" width="6.4" height="5.8" fill="#fff" stroke="#4a5670" stroke-width="0.6"/><path d="M0.3 2.2H6.7M0.3 4.1H6.7M2.5 0.3V6.1M4.6 2.2V6.1" stroke="#4a5670" stroke-width="0.55" fill="none"/></svg>
<svg style="left:672.6px;top:433.3px" width="8" height="7" viewBox="0 0 8 7"><rect x="0.4" y="0.4" width="7.2" height="6.2" fill="#c3c9d3" stroke="#7d8797" stroke-width="0.7"/><rect x="2" y="1.6" width="3.6" height="4" fill="#fff" stroke="#69748a" stroke-width="0.5"/></svg>
<svg style="left:683.3px;top:433.3px" width="8" height="7" viewBox="0 0 8 7"><rect x="0.4" y="0.4" width="7.2" height="6.2" fill="#c9ced7" stroke="#7d8797" stroke-width="0.7"/><rect x="1.2" y="1" width="2.4" height="3" fill="#fff"/><rect x="4.3" y="1" width="2.4" height="3" fill="#fff"/></svg>
<span style='left:698.90px;top:434.00px;font:6.80px/6.80px "Liberation Sans",sans-serif;color:#2a3a66;transform:scaleX(0.8970);transform-origin:0 50%;'>100%</span>
<div style="left:719.60px;top:432.40px;width:8.20px;height:8.20px;border-radius:50%;background:radial-gradient(circle at 45% 35%,#ffffff,#dbe3ee);border:0.8px solid #7d8ba3"></div>
<div style="left:721.50px;top:436.10px;width:4.40px;height:0.90px;background:#4a5670"></div>
<div style="left:787.80px;top:432.40px;width:8.20px;height:8.20px;border-radius:50%;background:radial-gradient(circle at 45% 35%,#ffffff,#dbe3ee);border:0.8px solid #7d8ba3"></div>
<div style="left:789.70px;top:436.10px;width:4.40px;height:0.90px;background:#4a5670"></div>
<div style="left:791.45px;top:434.30px;width:0.90px;height:4.40px;background:#4a5670"></div>
<div style="left:728.30px;top:436.10px;width:59.00px;height:0.90px;background:#7d8ba3"></div>
<svg style="left:754.7px;top:431.8px" width="6" height="9" viewBox="0 0 6 9"><path d="M0.5 0.5H5.5V5.6L3 8.4L0.5 5.6z" fill="#eef2f8" stroke="#6d7a92" stroke-width="0.8"/></svg>
<div style="left:676.70px;top:112.60px;width:122.00px;height:317.60px;background:#dde9f8;border-left:0.8px solid #a9bcd8"></div>
<div style="left:798.10px;top:17.60px;width:0.90px;height:425.80px;background:#e6edf8"></div>
<svg style="left:684.6px;top:118.3px" width="8" height="8" viewBox="0 0 8 8"><rect x="0.6" y="0.6" width="6.8" height="6.8" fill="#fbf3a6"/><path d="M4 0.4V7.6M0.4 4H7.6M1.4 1.4L6.6 6.6M6.6 1.4L1.4 6.6" stroke="#f3df5a" stroke-width="0.9"/><circle cx="4" cy="4" r="1.5" fill="#fffbe0"/></svg>
<span style='left:695.20px;top:118.50px;font:bold 8.60px/8.60px "Liberation Sans",sans-serif;color:#1f2c4d;transform:scaleX(0.9064);transform-origin:0 50%;'>Introducción</span>
<span style='left:683.90px;top:131.20px;font:6.80px/6.80px "Liberation Sans",sans-serif;color:#1f2fc8;transform:scaleX(0.9083);transform-origin:0 50%;'>Guía de introducción</span>
<span style='left:683.90px;top:142.10px;font:6.80px/6.80px "Liberation Sans",sans-serif;color:#1f2fc8;transform:scaleX(0.9427);transform-origin:0 50%;'>Ayuda y soporte técnico</span>
<svg style="left:683.8px;top:158.6px" width="9" height="9" viewBox="0 0 9 9"><path d="M3.2 0.6h2.6v2.6h2.6v2.6H5.8v2.6H3.2V5.8H0.6V3.2h2.6z" fill="#f9d648" stroke="#c79a1c" stroke-width="0.7"/></svg>
<span style='left:695.20px;top:159.50px;font:bold 8.60px/8.60px "Liberation Sans",sans-serif;color:#1f2c4d;transform:scaleX(0.8862);transform-origin:0 50%;'>Más opciones</span>
<span style='left:683.90px;top:172.20px;font:6.80px/6.80px "Liberation Sans",sans-serif;color:#1f2fc8;transform:scaleX(0.9337);transform-origin:0 50%;'>Obtener plantillas gratis</span>
<span style='left:683.90px;top:183.20px;font:6.80px/6.80px "Liberation Sans",sans-serif;color:#1f2fc8;transform:scaleX(0.9055);transform-origin:0 50%;'>Descargar imágenes prediseñadas</span>
<svg style="left:683.2px;top:198.6px" width="11" height="10" viewBox="0 0 11 10"><path d="M0.5 1H2L3.3 6.6H7.6" fill="none" stroke="#3c4660" stroke-width="0.9"/><path d="M2.5 2.6H7.4L6.9 5.4H3.2z" fill="#cfd6e2" stroke="#3c4660" stroke-width="0.6"/><circle cx="3.8" cy="8.2" r="0.9" fill="#3c4660"/><circle cx="7" cy="8.2" r="0.9" fill="#3c4660"/><path d="M7.8 1.2l0.8 1.5 1.7 0.2-1.2 1.2 0.3 1.7-1.6-0.8-1.5 0.8 0.3-1.7L5.4 2.9l1.7-0.2z" fill="#f7d13c"/></svg>
<span style='left:695.20px;top:200.20px;font:bold 8.60px/8.60px "Liberation Sans",sans-serif;color:#1f2c4d;transform:scaleX(0.9073);transform-origin:0 50%;'>Obtener más</span>
<span style='left:683.90px;top:213.20px;font:6.80px/6.80px "Liberation Sans",sans-serif;color:#1f2fc8;transform:scaleX(0.9286);transform-origin:0 50%;'>Obtener Microsoft PowerPoint o</span>
<span style='left:683.90px;top:220.80px;font:6.80px/6.80px "Liberation Sans",sans-serif;color:#1f2fc8;transform:scaleX(0.9262);transform-origin:0 50%;'>Microsoft Outlook</span>
<span style='left:685.70px;top:326.15px;font:6.90px/6.90px "Liberation Sans",sans-serif;color:#2b4a86;transform:scaleX(1.0427);transform-origin:0 50%;'>Anuncio</span>
<div style="left:684.80px;top:335.00px;width:105.60px;height:86.80px;background:#fc3502"></div>
<span style='left:718.70px;top:345.90px;font:7.40px/7.40px "Liberation Sans",sans-serif;color:#fff;transform:scaleX(1.0207);transform-origin:50% 50%;'>Presentamos</span>
<svg style="left:695.4px;top:357.2px" width="17.4" height="18.4" viewBox="0 0 17.4 18.4"><path d="M0.6 4.3L10.6 0.5L16.8 2.2V16.2L10.6 17.9L0.6 14.3L10.6 15.4V3.2L4.6 4.7V12.6L0.6 14.3z" fill="#fff"/></svg>
<span style='left:716.90px;top:359.90px;font:14.20px/14.20px "Liberation Sans",sans-serif;color:#fff;transform:scaleX(0.9710);transform-origin:0 50%;'>Office 365</span>
<span style='left:717.70px;top:378.20px;font:7.60px/7.60px "Liberation Sans",sans-serif;color:#fff;transform:scaleX(0.9546);transform-origin:0 50%;'>Hogar Premium</span>
<div style="left:701.70px;top:394.80px;width:72.00px;height:18.30px;background:#ff8c00"></div>
<span style='left:714.19px;top:397.10px;font:8.20px/8.20px "Liberation Sans",sans-serif;color:#fff;transform:scaleX(0.9748);transform-origin:50% 50%;'>Pruébalo</span>
<span style='left:709.98px;top:405.40px;font:8.20px/8.20px "Liberation Sans",sans-serif;color:#fff;transform:scaleX(0.9939);transform-origin:50% 50%;'>hoy mismo</span>
<svg style="left:756.6px;top:398.1px" width="12" height="12" viewBox="0 0 12 12"><circle cx="6" cy="6" r="5.2" fill="none" stroke="#fff" stroke-width="1"/><path d="M3.2 6H8.4M6.3 3.7L8.6 6L6.3 8.3" fill="none" stroke="#fff" stroke-width="1"/></svg>
<div style="left:51.00px;top:443.90px;width:748.00px;height:22.70px;background:linear-gradient(90deg,#8598b4 0px,#8598b4 34px,#a5bbda 36px,#a5bbda 557px,#7d8faa 590px,#7b8da8 100%)"></div>
<div style="left:51.00px;top:443.90px;width:748.00px;height:22.70px;background:linear-gradient(rgba(255,255,255,.22) 0,rgba(255,255,255,.08) 1.5px,rgba(255,255,255,0) 45%,rgba(0,0,20,.05) 100%)"></div>
<div style="left:56.60px;top:444.40px;width:20.60px;height:20.60px;border-radius:50%;background:radial-gradient(circle at 50% 92%,#3ad6f7 0%,#1b9ad8 28%,#0f5698 55%,#1a4c84 78%,#3a6498 100%);border:0.8px solid rgba(225,235,248,.55);box-shadow:0 0 1.2px rgba(20,35,60,.8)"></div>
<div style="left:57.80px;top:445.20px;width:18.20px;height:10.40px;border-radius:9.1px 9.1px 3px 3px / 8px 8px 3px 3px;background:linear-gradient(rgba(235,242,250,.62),rgba(200,215,235,.28))"></div>
<svg style="left:60.6px;top:448.6px" width="13" height="13" viewBox="0 0 13 13"><path d="M1.6 0.9Q3.8 -0.2 6.4 1.3L5.4 5.6Q3.2 4.6 0.6 5.8z" fill="#ea5a24"/><path d="M7.2 2.1Q9.6 3.4 12.4 2.3L11.4 6.4Q8.8 7.6 6.2 6.1z" fill="#8cc63f"/><path d="M0.4 6.7Q2.6 5.5 5.2 6.6L4.2 10.8Q2 9.8-0.4 10.9z" fill="#2f9be8"/><path d="M6 7.2Q8.4 8.6 11.2 7.4L10.2 11.6Q7.6 12.8 5 11.4z" fill="#fbc02d"/></svg>
<div style="left:86.00px;top:443.90px;width:34.30px;height:22.30px;background:linear-gradient(rgba(255,255,255,0.22),rgba(255,255,255,0.10) 50%,rgba(255,255,255,0.15));border:0.9px solid rgba(70,85,112,.5);border-radius:2px;box-shadow:inset 0 0 0 0.9px rgba(255,255,255,.55)"></div>
<div style="left:231.00px;top:443.90px;width:34.00px;height:22.30px;background:linear-gradient(rgba(255,255,255,0.28),rgba(255,255,255,0.16) 50%,rgba(255,255,255,0.21));border:0.9px solid rgba(70,85,112,.5);border-radius:2px;box-shadow:inset 0 0 0 0.9px rgba(255,255,255,.55)"></div>
<div style="left:266.90px;top:443.90px;width:31.40px;height:22.30px;background:linear-gradient(rgba(255,255,255,0.67),rgba(255,255,255,0.55) 50%,rgba(255,255,255,0.60));border:0.9px solid rgba(70,85,112,.5);border-radius:2px;box-shadow:inset 0 0 0 0.9px rgba(255,255,255,.55)"></div>
<div style="left:299.20px;top:444.00px;width:1.20px;height:22.00px;background:rgba(60,75,100,.7)"></div>
<svg style="left:93.4px;top:446.8px" width="20" height="18" viewBox="0 0 20 18"><path d="M1 2.2Q1 1 2.2 1H8L9.6 2.6H17.6Q18.8 2.6 18.8 3.8V15H1z" fill="#ecd58c"/><rect x="2.4" y="1.8" width="2" height="1" fill="#37a33a"/><rect x="7" y="2.6" width="2" height="1" fill="#d8382c"/><rect x="11.4" y="3.2" width="2" height="1" fill="#3b7fd6"/><path d="M0.6 5.2H19.4L18.6 16.4H1.4z" fill="#f7e7a8"/><path d="M0.6 5.2H19.4L19.2 8H0.8z" fill="#fbf0c4"/><path d="M4 10.2H16L17.2 17.4H13.4V14.4H6.6V17.4H2.8z" fill="#7cc4ec"/><path d="M4 10.2H16L16.4 12.6H3.6z" fill="#b9e0f6"/></svg>
<svg style="left:130px;top:446.4px" width="19" height="17" viewBox="0 0 19 17"><rect x="3.6" y="0.8" width="13.6" height="10" fill="#7ab648" stroke="#5e9636" stroke-width="0.5"/><rect x="2.6" y="2.2" width="13.6" height="10" fill="#f29b38" stroke="#cf7d22" stroke-width="0.5"/><rect x="1.6" y="3.8" width="13.6" height="10.4" fill="#7cb7ea" stroke="#4a88c6" stroke-width="0.6"/><rect x="2.8" y="5" width="11.2" height="8" fill="#cfe5f7"/><rect x="5" y="8.6" width="6.4" height="3.6" fill="#fff"/><rect x="11.2" y="5.8" width="2" height="2" fill="#d8452c"/><path d="M0.6 13.4Q6 17.2 12.6 14.6Q16 13.2 18.6 14.4Q14 14.6 11.6 16Q6 18.4 0.6 13.4z" fill="#f4b53c"/></svg>
<svg style="left:165px;top:444.6px" width="22" height="20" viewBox="0 0 22 20"><circle cx="11" cy="10.4" r="7.6" fill="#3aa6e4"/><circle cx="11" cy="10.4" r="7.6" fill="none" stroke="#1f7fc4" stroke-width="0.6"/><path d="M6.4 10.2Q6.8 6 11 6Q15.4 6 15.6 10.8H6.6V9.2H12.6Q12.2 7.8 11 7.8Q9.2 7.8 9.2 10.2z M6.6 11.6Q7.4 14.8 11 14.8Q13.6 14.8 15 12.6H12.2Q11.8 13 11 13Q9.6 13 9.4 11.6z" fill="#fff"/><path d="M2.6 17.6Q0.4 14.6 5.4 8.6Q11 2 18.2 1.6Q20.4 1.8 19.6 4.6Q19.6 2.8 17.8 2.9Q11.6 3.6 6.6 9.6Q2.8 14.2 3.6 16.8z" fill="#f3c32c"/></svg>
<svg style="left:203.6px;top:446.6px" width="16.6" height="16.6" viewBox="0 0 16.6 16.6"><circle cx="8.3" cy="8.3" r="8" fill="#dd4b3e"/><path d="M8.3 8.3L1.4 4.3A8 8 0 0 0 7.2 16.2L11.4 10z" fill="#3fa046"/><path d="M8.3 8.3L11.6 10.2L7.4 16.25A8 8 0 0 0 15.6 5z" fill="#f7cd2e"/><path d="M8.3 5H15.6A8 8 0 0 0 1.4 4.3L4.8 8.3z" fill="#dd4b3e"/><circle cx="8.3" cy="8.3" r="3.7" fill="#f2f2f2"/><circle cx="8.3" cy="8.3" r="2.9" fill="#4a8be0"/></svg>
<svg style="left:238px;top:447px" width="20" height="17" viewBox="0 0 20 17"><path d="M3 1.2L9.6 2.4L8.2 10.2L1.2 9z" fill="#a8dba0"/><path d="M5.4 5.2H11.4V12.4H5.4z" fill="#a9d3f0"/><path d="M7.4 5L16.2 2.4L18.8 11L10.2 13.8z" fill="#f5dc66"/></svg>
<svg style="left:272.6px;top:445.6px" width="19" height="18" viewBox="0 0 19 18"><rect x="0.6" y="0.8" width="16.4" height="16.4" rx="1" fill="#4aa459" stroke="#2f8040" stroke-width="0.6"/><rect x="1.6" y="1.8" width="14.4" height="14.4" fill="#6fbf78"/><path d="M3.2 3L6.4 3L8.6 6.6L11.2 2.4L14.2 2.4L10.2 8.6L14 14.6H10.6L8.4 10.8L6 14.6H2.8L6.8 8.6z" fill="#1f7a35" stroke="#eaf6ea" stroke-width="0.7"/><path d="M7.6 9.2L18.4 10.8L17.4 17.2L5.6 15.6z" fill="#f8fbf6" stroke="#9cc7a0" stroke-width="0.4"/><path d="M8 11.4L17.8 12.8M7.2 13.4L17.4 14.9M12 10L11 16.2" stroke="#a9d3ae" stroke-width="0.5"/></svg>
<span style='left:644.40px;top:449.90px;font:6.60px/6.60px "Liberation Sans",sans-serif;color:#eef2f8;transform:scaleX(0.9086);transform-origin:0 50%;'>ES</span>
<svg style="left:661.6px;top:453.6px" width="6" height="4" viewBox="0 0 6 4"><path d="M3 0.3L5.8 3.7H0.2z" fill="#f2f5fa"/></svg>
<svg style="left:674px;top:450.8px" width="9" height="9" viewBox="0 0 9 9"><rect x="0.2" y="0.2" width="8.6" height="8.6" rx="1" fill="#1fa3a8"/><ellipse cx="4.5" cy="4.5" rx="3.3" ry="1.9" fill="#e8f4f4" stroke="#0f3a40" stroke-width="0.7"/><circle cx="4.5" cy="4.5" r="1.2" fill="#0f2a30"/></svg>
<svg style="left:688px;top:449.8px" width="10" height="11" viewBox="0 0 10 11"><circle cx="6.6" cy="3.2" r="2.8" fill="#3f9be0"/><path d="M5 2.2Q6.6 0.6 8.4 2.2Q7.2 3.6 5.6 3.4z" fill="#5fc04e"/><rect x="1" y="3.4" width="5.6" height="4.2" fill="#1c2fa8" stroke="#c9d0dc" stroke-width="0.6"/><rect x="0.2" y="8.8" width="8.4" height="1.2" fill="#f0a81c"/><rect x="3.2" y="7.6" width="1.4" height="1.2" fill="#c9d0dc"/></svg>
<svg style="left:702px;top:450.4px" width="9" height="10" viewBox="0 0 9 10"><rect x="0.6" y="1.6" width="6" height="7.8" rx="0.8" fill="#f4f6f9" stroke="#2a3142" stroke-width="0.7"/><rect x="2.2" y="0.6" width="2.8" height="1.2" fill="#2a3142"/><path d="M4.4 3L2.6 5.6H4L3.2 8L5.4 5H4z" fill="#2a3142"/><path d="M6.2 2.2L8.6 3.4V6.4L7.2 5.4z" fill="#f4f6f9" stroke="#2a3142" stroke-width="0.5"/></svg>
<svg style="left:715.4px;top:451.6px" width="9" height="8" viewBox="0 0 9 8"><rect x="0.3" y="5.6" width="1.4" height="2.2" fill="#f2f5fa"/><rect x="2.5" y="4.2" width="1.4" height="3.6" fill="#f2f5fa"/><rect x="4.7" y="2.4" width="1.4" height="5.4" fill="#f2f5fa"/><rect x="6.9" y="0.4" width="1.5" height="7.4" fill="#f2f5fa"/></svg>
<svg style="left:729.4px;top:450.4px" width="10" height="10" viewBox="0 0 10 10"><path d="M0.6 3.4H2.2L4.6 1V8.6L2.2 6.2H0.6z" fill="#f4f6f9" stroke="#b9c1cf" stroke-width="0.3"/><circle cx="6.6" cy="6.6" r="2.7" fill="#e0262c"/><path d="M5.2 5.4L8 7.8M8 5.4L5.2 7.8" stroke="#fff" stroke-width="0.9"/></svg>
<span style='left:758.74px;top:447.50px;font:6.60px/6.60px "Liberation Sans",sans-serif;color:#eef2f8;transform:scaleX(0.9203);transform-origin:50% 50%;'>17:44</span>
<span style='left:750.08px;top:457.20px;font:6.60px/6.60px "Liberation Sans",sans-serif;color:#eef2f8;transform:scaleX(0.9990);transform-origin:50% 50%;'>16/12/2013</span>
<div style="left:790.60px;top:443.60px;width:8.20px;height:23.00px;background:linear-gradient(90deg,#485468,#8d9cb4 60%,#6a788f);border-left:0.8px solid #3c475a"></div>
<svg style="left:52.4px;top:19.8px" width="9" height="9.6" viewBox="0 0 9 9.6"><rect x="0.4" y="0.4" width="8.2" height="8.8" rx="0.8" fill="#e9f3e6" stroke="#6aa868" stroke-width="0.7"/><path d="M1.6 1.6H3.6L4.6 3.5L5.8 1.6H7.6L5.5 4.8L7.7 8H5.7L4.5 6L3.3 8H1.4L3.6 4.8z" fill="#2f8a3a"/></svg>
<div style="left:63.30px;top:20.50px;width:0.80px;height:8.50px;background:#9fb2cf"></div>
<svg style="left:68px;top:20.4px" width="8.4" height="8.4" viewBox="0 0 9 9"><path d="M0.5 0.5H8.5V8.5H1.7L0.5 7.3z" fill="#4343c6" stroke="#2c2c96" stroke-width="0.6"/><rect x="2" y="0.9" width="5" height="3.4" fill="#f1f3fb"/><rect x="2.6" y="5.6" width="3.8" height="2.9" fill="#1a1d4a"/><rect x="3.2" y="6.2" width="1.2" height="1.8" fill="#dfe3f5"/></svg>
<svg style="left:81.6px;top:20.6px" width="8" height="8" viewBox="0 0 8 8"><path d="M1 3.4H4.6Q6.8 3.4 6.8 5.2Q6.8 7 4.4 7.2" fill="none" stroke="#a3b0c8" stroke-width="1.3"/><path d="M0.4 3.4L3 1V5.8z" fill="#a3b0c8"/></svg>
<svg style="left:91.8px;top:23.6px" width="4" height="3" viewBox="0 0 4 3"><path d="M0.2 0.3H3.8L2 2.7z" fill="#8795b0"/></svg>
<svg style="left:99.4px;top:20.6px" width="8" height="8" viewBox="0 0 8 8"><path d="M7 3.4H3.4Q1.2 3.4 1.2 5.2Q1.2 7 3.6 7.2" fill="none" stroke="#a3b0c8" stroke-width="1.3"/><path d="M7.6 3.4L5 1V5.8z" fill="#a3b0c8"/></svg>
<svg style="left:110.6px;top:23.6px" width="4" height="3" viewBox="0 0 4 3"><path d="M0.2 0.3H3.8L2 2.7z" fill="#8795b0"/></svg>
<div style="left:117.70px;top:20.50px;width:0.80px;height:8.50px;background:#9fb2cf"></div>
<svg style="left:120.6px;top:22.8px" width="4" height="4.2" viewBox="0 0 5 5"><rect x="0.3" y="0.3" width="4.4" height="1" fill="#111"/><path d="M0.3 2.2H4.7L2.5 4.7z" fill="#111"/></svg>
<svg style="left:743px;top:19px" width="56" height="26" viewBox="0 0 56 26"><g fill="#f4f7fb" stroke="#5a6884" stroke-width="0.6"><rect x="1.4" y="5.2" width="6.2" height="2.2" rx="0.6"/><rect x="23.4" y="2.2" width="4.6" height="3.6"/><rect x="21.6" y="4" width="4.6" height="3.6"/><path d="M42.6 2.6l1.2-1.2 1.8 1.8 1.8-1.8 1.2 1.2-1.8 1.8 1.8 1.8-1.2 1.2-1.8-1.8-1.8 1.8-1.2-1.2 1.8-1.8z"/><rect x="21" y="19.4" width="5.6" height="2" rx="0.5"/><rect x="35.4" y="16.6" width="4.4" height="3.4"/><rect x="33.6" y="18.4" width="4.4" height="3.4"/><path d="M46.8 17.2l1.1-1.1 1.7 1.7 1.7-1.7 1.1 1.1-1.7 1.7 1.7 1.7-1.1 1.1-1.7-1.7-1.7 1.7-1.1-1.1 1.7-1.7z"/></g><circle cx="10.5" cy="19.5" r="4.5" fill="#3f7fd6" stroke="#2a5cae" stroke-width="0.6"/><circle cx="9.6" cy="18" r="2.6" fill="#6fa5ea" opacity=".6"/></svg>
<span style='left:751.24px;top:35.00px;font:bold 7.40px/7.40px "Liberation Sans",sans-serif;color:#fff;transform:scaleX(1.0000);transform-origin:50% 50%;'>?</span>
<svg style="left:737.6px;top:36.4px" width="7" height="5" viewBox="0 0 7 5"><path d="M0.5 3.4L3.5 0.6L6.5 3.4L5.5 4.4L3.5 2.6L1.5 4.4z" fill="#f4f7fb" stroke="#5a6884" stroke-width="0.6"/></svg>
<div style="left:51.40px;top:32.20px;width:32.80px;height:13.40px;background:linear-gradient(#5cae4f 0%,#3d9a3a 45%,#24832a 55%,#2e8f33 100%);border:0.8px solid #2a6f2c;border-bottom:none;border-radius:2px 2px 0 0"></div>
<span style='left:55.60px;top:35.60px;font:7.20px/7.20px "Liberation Sans",sans-serif;color:#fff;transform:scaleX(0.9163);transform-origin:50% 50%;'>Archivo</span>
<div style="left:86.40px;top:32.80px;width:31.20px;height:13.40px;background:linear-gradient(#f1f6fc,#e6eef8);border:0.8px solid #b9cae3;border-bottom:none;border-radius:2.5px 2.5px 0 0"></div>
<span style='left:94.00px;top:35.70px;font:7.20px/7.20px "Liberation Sans",sans-serif;color:#1f2352;transform:scaleX(0.9519);transform-origin:0 50%;'>Inicio</span>
<span style='left:126.40px;top:35.80px;font:7.20px/7.20px "Liberation Sans",sans-serif;color:#1f2352;transform:scaleX(0.9259);transform-origin:0 50%;'>Insertar</span>
<span style='left:165.60px;top:35.80px;font:7.20px/7.20px "Liberation Sans",sans-serif;color:#1f2352;transform:scaleX(0.9457);transform-origin:0 50%;'>Diseño de página</span>
<span style='left:235.60px;top:35.80px;font:7.20px/7.20px "Liberation Sans",sans-serif;color:#1f2352;transform:scaleX(0.8931);transform-origin:0 50%;'>Fórmulas</span>
<div style="left:746.20px;top:46.40px;width:52.20px;height:49.00px;background:linear-gradient(#eef4fb,#e6eef8 40%,#dfe9f5)"></div>
<div style="left:104.60px;top:47.50px;width:0.80px;height:46.50px;background:linear-gradient(rgba(160,180,210,.2),#a9bdd9 30%,#a9bdd9 80%,rgba(160,180,210,.3))"></div>
<div style="left:105.40px;top:47.50px;width:0.80px;height:46.50px;background:rgba(255,255,255,.7)"></div>
<div style="left:227.30px;top:47.50px;width:0.80px;height:46.50px;background:linear-gradient(rgba(160,180,210,.2),#a9bdd9 30%,#a9bdd9 80%,rgba(160,180,210,.3))"></div>
<div style="left:228.10px;top:47.50px;width:0.80px;height:46.50px;background:rgba(255,255,255,.7)"></div>
<div style="left:324.00px;top:47.50px;width:0.80px;height:46.50px;background:linear-gradient(rgba(160,180,210,.2),#a9bdd9 30%,#a9bdd9 80%,rgba(160,180,210,.3))"></div>
<div style="left:324.80px;top:47.50px;width:0.80px;height:46.50px;background:rgba(255,255,255,.7)"></div>
<div style="left:408.10px;top:47.50px;width:0.80px;height:46.50px;background:linear-gradient(rgba(160,180,210,.2),#a9bdd9 30%,#a9bdd9 80%,rgba(160,180,210,.3))"></div>
<div style="left:408.90px;top:47.50px;width:0.80px;height:46.50px;background:rgba(255,255,255,.7)"></div>
<div style="left:528.40px;top:47.50px;width:0.80px;height:46.50px;background:linear-gradient(rgba(160,180,210,.2),#a9bdd9 30%,#a9bdd9 80%,rgba(160,180,210,.3))"></div>
<div style="left:529.20px;top:47.50px;width:0.80px;height:46.50px;background:rgba(255,255,255,.7)"></div>
<div style="left:578.50px;top:47.50px;width:0.80px;height:46.50px;background:linear-gradient(rgba(160,180,210,.2),#a9bdd9 30%,#a9bdd9 80%,rgba(160,180,210,.3))"></div>
<div style="left:579.30px;top:47.50px;width:0.80px;height:46.50px;background:rgba(255,255,255,.7)"></div>
<div style="left:672.00px;top:47.50px;width:0.80px;height:46.50px;background:linear-gradient(rgba(160,180,210,.2),#a9bdd9 30%,#a9bdd9 80%,rgba(160,180,210,.3))"></div>
<div style="left:672.80px;top:47.50px;width:0.80px;height:46.50px;background:rgba(255,255,255,.7)"></div>
<div style="left:712.00px;top:47.50px;width:0.80px;height:46.50px;background:linear-gradient(rgba(160,180,210,.2),#a9bdd9 30%,#a9bdd9 80%,rgba(160,180,210,.3))"></div>
<div style="left:712.80px;top:47.50px;width:0.80px;height:46.50px;background:rgba(255,255,255,.7)"></div>
<div style="left:745.30px;top:47.50px;width:0.80px;height:46.50px;background:linear-gradient(rgba(160,180,210,.2),#a9bdd9 30%,#a9bdd9 80%,rgba(160,180,210,.3))"></div>
<div style="left:746.10px;top:47.50px;width:0.80px;height:46.50px;background:rgba(255,255,255,.7)"></div>
<span style='left:53.10px;top:87.70px;font:7.00px/7.00px "Liberation Sans",sans-serif;color:#5b78a6;transform:scaleX(0.9381);transform-origin:0 50%;'>Portapapeles</span>
<span style='left:150.70px;top:87.70px;font:7.00px/7.00px "Liberation Sans",sans-serif;color:#5b78a6;transform:scaleX(0.9452);transform-origin:0 50%;'>Fuente</span>
<span style='left:255.40px;top:87.70px;font:7.00px/7.00px "Liberation Sans",sans-serif;color:#5b78a6;transform:scaleX(0.9597);transform-origin:0 50%;'>Alineación</span>
<span style='left:349.30px;top:87.70px;font:7.00px/7.00px "Liberation Sans",sans-serif;color:#5b78a6;transform:scaleX(0.9358);transform-origin:0 50%;'>Número</span>
<span style='left:460.00px;top:87.70px;font:7.00px/7.00px "Liberation Sans",sans-serif;color:#5b78a6;transform:scaleX(0.8973);transform-origin:0 50%;'>Estilos</span>
<span style='left:544.50px;top:87.70px;font:7.00px/7.00px "Liberation Sans",sans-serif;color:#5b78a6;transform:scaleX(0.9087);transform-origin:0 50%;'>Celdas</span>
<span style='left:612.60px;top:87.70px;font:7.00px/7.00px "Liberation Sans",sans-serif;color:#5b78a6;transform:scaleX(0.9930);transform-origin:0 50%;'>Modificar</span>
<span style='left:680.50px;top:87.70px;font:7.00px/7.00px "Liberation Sans",sans-serif;color:#5b78a6;transform:scaleX(0.9313);transform-origin:0 50%;'>Revisión</span>
<span style='left:715.00px;top:87.70px;font:7.00px/7.00px "Liberation Sans",sans-serif;color:#5b78a6;transform:scaleX(0.9598);transform-origin:0 50%;'>Actualizar</span>
<svg style="left:98.80px;top:90.00px" width="4" height="4" viewBox="0 0 4 4"><path d="M0.3 3V0.3H3" fill="none" stroke="#7f8fa8" stroke-width="0.6"/><path d="M3.8 1.6V3.8H1.6z" fill="#6f7f98"/></svg>
<svg style="left:220.20px;top:90.00px" width="4" height="4" viewBox="0 0 4 4"><path d="M0.3 3V0.3H3" fill="none" stroke="#7f8fa8" stroke-width="0.6"/><path d="M3.8 1.6V3.8H1.6z" fill="#6f7f98"/></svg>
<svg style="left:317.80px;top:90.00px" width="4" height="4" viewBox="0 0 4 4"><path d="M0.3 3V0.3H3" fill="none" stroke="#7f8fa8" stroke-width="0.6"/><path d="M3.8 1.6V3.8H1.6z" fill="#6f7f98"/></svg>
<svg style="left:400.80px;top:90.00px" width="4" height="4" viewBox="0 0 4 4"><path d="M0.3 3V0.3H3" fill="none" stroke="#7f8fa8" stroke-width="0.6"/><path d="M3.8 1.6V3.8H1.6z" fill="#6f7f98"/></svg>
<svg style="left:60.6px;top:48.6px" width="17" height="18.4" viewBox="0 0 17 18.4"><rect x="0.8" y="2" width="13.2" height="15" rx="1" fill="#d2d5db" stroke="#bdc2ca" stroke-width="0.7"/><rect x="4.4" y="0.6" width="6" height="2.8" rx="0.8" fill="#dfe2e7" stroke="#b3b8c2" stroke-width="0.6"/><path d="M5.8 7.4H12.6L16 10.6V17.6H5.8z" fill="#e6e8ec" stroke="#bfc4cc" stroke-width="0.7"/><path d="M12.6 7.4V10.6H16" fill="#d2d6dc" stroke="#bfc4cc" stroke-width="0.5"/></svg>
<span style='left:58.99px;top:69.90px;font:7.20px/7.20px "Liberation Sans",sans-serif;color:#8d97aa;transform:scaleX(0.8848);transform-origin:50% 50%;'>Pegar</span>
<svg style="left:66.80px;top:79.92px" width="3.4" height="2.5" viewBox="0 0 4 3"><path d="M0.2 0.3H3.8L2 2.7z" fill="#a3acbd"/></svg>
<svg style="left:83.9px;top:49.3px" width="7" height="9.2" viewBox="0 0 7 9.2"><path d="M2 0.3L4.5 5.6M5 0.3L2.5 5.6" stroke="#3c4254" stroke-width="1" fill="none"/><ellipse cx="1.9" cy="7.1" rx="1.3" ry="1.5" fill="none" stroke="#2f4fc0" stroke-width="1.1"/><ellipse cx="5.1" cy="7.1" rx="1.3" ry="1.5" fill="none" stroke="#2f4fc0" stroke-width="1.1"/></svg>
<svg style="left:82.6px;top:61.6px" width="10" height="9.4" viewBox="0 0 10 9.4"><path d="M0.5 0.5H4.6L6.2 2.1V6.4H0.5z" fill="#f4f7fc" stroke="#7f93b8" stroke-width="0.6"/><path d="M3.6 3H7.7L9.4 4.6V8.9H3.6z" fill="#4a7fd8" stroke="#2f57a8" stroke-width="0.6"/><rect x="4.6" y="5.4" width="3.6" height="2.6" fill="#dfeafa"/></svg>
<svg style="left:94.10px;top:64.92px" width="3.4" height="2.5" viewBox="0 0 4 3"><path d="M0.2 0.3H3.8L2 2.7z" fill="#6a7488"/></svg>
<svg style="left:82.8px;top:74.6px" width="10" height="9.6" viewBox="0 0 10 9.6"><path d="M6.2 2.8L8.6 0.5L9.5 1.4L7.2 3.8z" fill="#5a4fb0"/><path d="M1 5.4L5.6 2.4L7.6 4.6L3.8 8.8z" fill="#f3d45c" stroke="#b8942c" stroke-width="0.6"/><path d="M1 5.4L3.8 8.8L2.6 9.2L0.4 6.4z" fill="#caa63a"/></svg>
<div style="left:108.40px;top:52.30px;width:64.60px;height:12.00px;background:#f5f8fc;border:0.8px solid #b3c4dd"></div>
<span style='left:110.80px;top:55.00px;font:7.20px/7.20px "Liberation Sans",sans-serif;color:#111;transform:scaleX(0.8674);transform-origin:0 50%;'>Cambria</span>
<svg style="left:167.50px;top:57.12px" width="3.4" height="2.5" viewBox="0 0 4 3"><path d="M0.2 0.3H3.8L2 2.7z" fill="#4f596e"/></svg>
<div style="left:173.40px;top:52.30px;width:25.50px;height:12.00px;background:#f5f8fc;border:0.8px solid #b3c4dd"></div>
<span style='left:175.70px;top:55.00px;font:7.20px/7.20px "Liberation Sans",sans-serif;color:#111;transform:scaleX(0.8491);transform-origin:0 50%;'>20</span>
<svg style="left:192.60px;top:57.12px" width="3.4" height="2.5" viewBox="0 0 4 3"><path d="M0.2 0.3H3.8L2 2.7z" fill="#4f596e"/></svg>
<span style='left:201.40px;top:53.20px;font:bold 10.40px/10.40px "Liberation Serif",serif;color:#2b2b2b;transform:scaleX(1.0000);transform-origin:0 50%;'>A</span>
<svg style="left:207.2px;top:53.2px" width="3" height="2.4" viewBox="0 0 3 2.4"><path d="M1.5 0.2L2.9 2.2H0.1z" fill="#2f55c0"/></svg>
<span style='left:215.00px;top:55.90px;font:bold 7.40px/7.40px "Liberation Serif",serif;color:#2b2b2b;transform:scaleX(1.0000);transform-origin:0 50%;'>A</span>
<svg style="left:219.6px;top:54px" width="3" height="2.4" viewBox="0 0 3 2.4"><path d="M1.5 2.2L2.9 0.2H0.1z" fill="#2f55c0"/></svg>
<span style='left:112.20px;top:70.30px;font:bold 8.60px/8.60px "Liberation Serif",serif;color:#111;transform:scaleX(1.0627);transform-origin:0 50%;'>N</span>
<span style='left:126.20px;top:70.30px;font:italic bold 8.60px/8.60px "Liberation Serif",serif;color:#333;transform:scaleX(1.0808);transform-origin:0 50%;'>K</span>
<span style='left:140.20px;top:70.40px;font:bold 8.00px/8.00px "Liberation Sans",sans-serif;color:#222;transform:scaleX(1.0000);transform-origin:0 50%;text-decoration:underline;'>S</span>
<svg style="left:149.90px;top:73.32px" width="3.4" height="2.5" viewBox="0 0 4 3"><path d="M0.2 0.3H3.8L2 2.7z" fill="#6a7488"/></svg>
<div style="left:157.20px;top:69.60px;width:0.80px;height:12.00px;background:#b5c5dd"></div>
<svg style="left:163.8px;top:70.2px" width="9" height="10" viewBox="0 0 9 10"><path d="M0.5 0.5H8.5V8H0.5zM4.5 0.5V8M0.5 4.2H8.5" fill="none" stroke="#b3bccb" stroke-width="0.7" stroke-dasharray="1 0.6"/><path d="M0.3 9.2H8.7" stroke="#8f9bb0" stroke-width="0.9"/></svg>
<svg style="left:175.60px;top:73.32px" width="3.4" height="2.5" viewBox="0 0 4 3"><path d="M0.2 0.3H3.8L2 2.7z" fill="#8f9bb0"/></svg>
<div style="left:183.10px;top:69.60px;width:0.80px;height:12.00px;background:#b5c5dd"></div>
<svg style="left:188px;top:69.4px" width="10.4" height="11" viewBox="0 0 10.4 11"><path d="M2.6 3.4L5.6 1L8.2 4.6L5 7.2z" fill="#f0f3f9" stroke="#4a5a8a" stroke-width="0.7"/><path d="M4.6 0.6V3.6" stroke="#3c4670" stroke-width="0.7"/><path d="M8.2 4.6Q9.8 6 9.2 7.6Q8.2 6.6 8.2 4.6z" fill="#2f55c0"/><rect x="0.2" y="8.4" width="9.8" height="2.3" fill="#fbf01c"/></svg>
<svg style="left:200.60px;top:73.32px" width="3.4" height="2.5" viewBox="0 0 4 3"><path d="M0.2 0.3H3.8L2 2.7z" fill="#6a7488"/></svg>
<span style='left:209.00px;top:68.00px;font:bold 9.60px/9.60px "Liberation Serif",serif;color:#2f4fa8;transform:scaleX(1.0000);transform-origin:0 50%;'>A</span>
<div style="left:207.80px;top:77.70px;width:9.20px;height:2.40px;background:#f01414"></div>
<svg style="left:219.80px;top:73.32px" width="3.4" height="2.5" viewBox="0 0 4 3"><path d="M0.2 0.3H3.8L2 2.7z" fill="#6a7488"/></svg>
<div style="left:233.00px;top:54.00px;width:9.00px;height:1.60px;background:#2b2b2b"></div>
<div style="left:233.00px;top:57.40px;width:9.00px;height:0.80px;background:#9aa3b3"></div>
<div style="left:244.10px;top:52.00px;width:13.80px;height:12.80px;background:linear-gradient(#fde28a,#fbc94b);border:0.8px solid #e3a72c;border-radius:1.6px"></div>
<div style="left:246.60px;top:55.60px;width:8.80px;height:0.80px;background:#7d7042"></div>
<div style="left:246.60px;top:57.60px;width:8.80px;height:1.80px;background:#2b2b2b"></div>
<div style="left:246.60px;top:60.60px;width:8.80px;height:0.80px;background:#7d7042"></div>
<div style="left:260.20px;top:58.20px;width:8.40px;height:0.80px;background:#9aa3b3"></div>
<div style="left:260.20px;top:60.20px;width:8.40px;height:1.70px;background:#2b2b2b"></div>
<div style="left:260.20px;top:62.80px;width:8.40px;height:0.80px;background:#9aa3b3"></div>
<svg style="left:274.8px;top:53.2px" width="10" height="10" viewBox="0 0 10 10"><path d="M1 4.4L5 1L8.6 5.2M2.4 6L6 3M3.6 7.6L7.4 4.4" stroke="#4a5060" stroke-width="0.9" fill="none"/><path d="M5.6 8.8L8.8 6.2L9 8.8z" fill="#4a5060"/></svg>
<svg style="left:284.90px;top:56.52px" width="3.4" height="2.5" viewBox="0 0 4 3"><path d="M0.2 0.3H3.8L2 2.7z" fill="#6a7488"/></svg>
<div style="left:233.00px;top:71.70px;width:9.00px;height:1.20px;background:#2b2b2b"></div>
<div style="left:233.00px;top:73.30px;width:6.40px;height:1.20px;background:#2b2b2b"></div>
<div style="left:233.00px;top:74.90px;width:9.00px;height:1.20px;background:#2b2b2b"></div>
<div style="left:233.00px;top:76.50px;width:6.40px;height:1.20px;background:#2b2b2b"></div>
<div style="left:246.60px;top:71.70px;width:9.00px;height:1.20px;background:#2b2b2b"></div>
<div style="left:247.90px;top:73.30px;width:6.40px;height:1.20px;background:#2b2b2b"></div>
<div style="left:246.60px;top:74.90px;width:9.00px;height:1.20px;background:#2b2b2b"></div>
<div style="left:247.90px;top:76.50px;width:6.40px;height:1.20px;background:#2b2b2b"></div>
<div style="left:259.80px;top:71.70px;width:9.00px;height:1.20px;background:#2b2b2b"></div>
<div style="left:262.40px;top:73.30px;width:6.40px;height:1.20px;background:#2b2b2b"></div>
<div style="left:259.80px;top:74.90px;width:9.00px;height:1.20px;background:#2b2b2b"></div>
<div style="left:262.40px;top:76.50px;width:6.40px;height:1.20px;background:#2b2b2b"></div>
<div style="left:275.80px;top:71.70px;width:8.60px;height:1.20px;background:#2b2b2b"></div>
<div style="left:278.80px;top:73.30px;width:5.60px;height:1.20px;background:#2b2b2b"></div>
<div style="left:278.80px;top:74.90px;width:5.60px;height:1.20px;background:#2b2b2b"></div>
<div style="left:275.80px;top:76.50px;width:8.60px;height:1.20px;background:#2b2b2b"></div>
<svg style="left:274.60px;top:72.5px" width="4" height="4.6" viewBox="0 0 4 4.6"><path d="M0.2 2.3L3 0.3V4.3z" fill="#2f55c0"/></svg>
<div style="left:289.00px;top:71.70px;width:8.60px;height:1.20px;background:#2b2b2b"></div>
<div style="left:292.00px;top:73.30px;width:5.60px;height:1.20px;background:#2b2b2b"></div>
<div style="left:292.00px;top:74.90px;width:5.60px;height:1.20px;background:#2b2b2b"></div>
<div style="left:289.00px;top:76.50px;width:8.60px;height:1.20px;background:#2b2b2b"></div>
<svg style="left:287.80px;top:72.5px" width="4" height="4.6" viewBox="0 0 4 4.6"><path d="M0.2 2.3L3 0.3V4.3z" fill="#2f55c0"/></svg>
<div style="left:301.20px;top:52.00px;width:0.80px;height:30.00px;background:#b5c5dd"></div>
<svg style="left:305.4px;top:53.2px" width="10" height="10" viewBox="0 0 10 10"><rect x="0.6" y="0.6" width="7" height="2" fill="#e9edf4" stroke="#5a6478" stroke-width="0.6"/><rect x="0.6" y="3.8" width="7" height="2" fill="#d98a3a" stroke="#8a5a2a" stroke-width="0.5"/><rect x="0.6" y="7" width="5" height="2" fill="#e9edf4" stroke="#5a6478" stroke-width="0.6"/><path d="M8.8 1.4V7.8H7" stroke="#3c4254" stroke-width="0.8" fill="none"/></svg>
<div style="left:304.20px;top:69.00px;width:18.40px;height:12.80px;background:linear-gradient(#fde28a,#fbc94b);border:0.8px solid #e3a72c;border-radius:1.6px"></div>
<div style="left:315.40px;top:69.40px;width:0.80px;height:12.00px;background:#e3a72c"></div>
<svg style="left:306px;top:70.8px" width="9" height="9.2" viewBox="0 0 9 9.2"><rect x="0.4" y="0.4" width="8.2" height="8.4" fill="#f7f9fc" stroke="#5a6478" stroke-width="0.6"/><rect x="0.8" y="3" width="7.4" height="3.2" fill="#9db7e4"/><path d="M1.6 4.6H7.4" stroke="#1f2a4a" stroke-width="0.8"/><path d="M3 0.4V3M6 0.4V3M3 6.2V8.8M6 6.2V8.8" stroke="#5a6478" stroke-width="0.5"/></svg>
<svg style="left:317.40px;top:73.92px" width="3.4" height="2.5" viewBox="0 0 4 3"><path d="M0.2 0.3H3.8L2 2.7z" fill="#3c3a2a"/></svg>
<div style="left:328.20px;top:52.30px;width:77.80px;height:12.00px;background:#f5f8fc;border:0.8px solid #b3c4dd"></div>
<span style='left:330.20px;top:55.00px;font:7.20px/7.20px "Liberation Sans",sans-serif;color:#111;transform:scaleX(0.8979);transform-origin:0 50%;'>General</span>
<svg style="left:399.80px;top:57.12px" width="3.4" height="2.5" viewBox="0 0 4 3"><path d="M0.2 0.3H3.8L2 2.7z" fill="#4f596e"/></svg>
<svg style="left:329.6px;top:69.6px" width="11.4" height="11" viewBox="0 0 11.4 11"><rect x="0.4" y="0.6" width="9.6" height="6" rx="0.6" fill="#3f63c4" stroke="#2a4290" stroke-width="0.6"/><rect x="1.6" y="1.8" width="7.2" height="3.6" fill="#8fa9e6"/><circle cx="5.2" cy="3.6" r="1.3" fill="#dfe7fa"/><ellipse cx="7.6" cy="8.8" rx="2.8" ry="1.4" fill="#e9b93a" stroke="#a87f1c" stroke-width="0.5"/><ellipse cx="7.6" cy="7.6" rx="2.8" ry="1.4" fill="#f6d260" stroke="#a87f1c" stroke-width="0.5"/></svg>
<svg style="left:342.90px;top:73.52px" width="3.4" height="2.5" viewBox="0 0 4 3"><path d="M0.2 0.3H3.8L2 2.7z" fill="#6a7488"/></svg>
<span style='left:350.80px;top:70.80px;font:8.40px/8.40px "Liberation Sans",sans-serif;color:#151515;transform:scaleX(0.9372);transform-origin:0 50%;'>%</span>
<span style='left:364.00px;top:71.90px;font:7.00px/7.00px "Liberation Sans",sans-serif;color:#151515;transform:scaleX(0.7534);transform-origin:0 50%;'>000</span>
<div style="left:377.10px;top:69.60px;width:0.80px;height:12.00px;background:#b5c5dd"></div>
<svg style="left:381.6px;top:70.4px" width="10" height="10" viewBox="0 0 10 10"><path d="M0.4 2.4H3.4M2.2 1L3.8 2.4L2.2 3.8" stroke="#2f55c0" stroke-width="0.8" fill="none"/><text x="3.4" y="9.2" font-size="5.6" font-weight="bold" font-family="Liberation Sans,sans-serif" fill="#1c1c1c">,0</text><text x="6.2" y="5" font-size="5.2" font-weight="bold" font-family="Liberation Sans,sans-serif" fill="#1c1c1c">0</text></svg>
<svg style="left:394.6px;top:70.4px" width="10" height="10" viewBox="0 0 10 10"><path d="M3.6 7.6H0.6M1.8 6.2L0.2 7.6L1.8 9" stroke="#2f55c0" stroke-width="0.8" fill="none"/><text x="4.2" y="4.8" font-size="5.2" font-weight="bold" font-family="Liberation Sans,sans-serif" fill="#1c1c1c">,00</text><text x="6.4" y="9.6" font-size="5.2" font-weight="bold" font-family="Liberation Sans,sans-serif" fill="#1c1c1c">0</text></svg>
<svg style="left:422.6px;top:49.6px" width="19" height="17" viewBox="0 0 19 17"><rect x="0.5" y="0.5" width="16.3" height="14.7" fill="#fbfcfe" stroke="#9aa9c4" stroke-width="0.7"/><path d="M4.6 0.5V15.2M8.6 0.5V15.2M12.6 0.5V15.2M0.5 4.2H16.8M0.5 7.8H16.8M0.5 11.4H16.8" stroke="#c3cde0" stroke-width="0.6"/><rect x="4.6" y="0.5" width="3.9" height="3.7" fill="#e8472e"/><rect x="4.6" y="4.2" width="6.6" height="3.6" fill="#4f7fe0"/><rect x="4.6" y="7.8" width="7.8" height="3.6" fill="#e8472e"/><rect x="4.6" y="11.4" width="3.8" height="3.8" fill="#4f7fe0"/><rect x="9" y="9.6" width="9.2" height="6.8" fill="#eef2f8" stroke="#8f9bb3" stroke-width="0.6"/><path d="M13 11L10.6 12.2L13 13.4M10.6 14.6H13M14.4 11L16.8 12.2L14.4 13.4M14.4 14.6H16.8" stroke="#1f2433" stroke-width="0.8" fill="none"/></svg>
<span style='left:418.90px;top:70.20px;font:7.20px/7.20px "Liberation Sans",sans-serif;color:#1f2352;transform:scaleX(0.9102);transform-origin:50% 50%;'>Formato</span>
<span style='left:412.80px;top:78.00px;font:7.20px/7.20px "Liberation Sans",sans-serif;color:#1f2352;transform:scaleX(0.9799);transform-origin:0 50%;'>condicional</span>
<svg style="left:449.50px;top:80.32px" width="3.4" height="2.5" viewBox="0 0 4 3"><path d="M0.2 0.3H3.8L2 2.7z" fill="#6a7488"/></svg>
<svg style="left:464.6px;top:49.6px" width="20" height="17.4" viewBox="0 0 20 17.4"><rect x="0.5" y="0.6" width="17" height="14.2" fill="#fbfcfe" stroke="#9aa9c4" stroke-width="0.7"/><rect x="4.8" y="4.2" width="12.7" height="10.6" fill="#8fb0ee"/><path d="M4.8 0.6V14.8M9 0.6V14.8M13.2 0.6V14.8M0.5 4.2H17.5M0.5 7.8H17.5M0.5 11.4H17.5" stroke="#dfe6f3" stroke-width="0.8"/><path d="M18.8 4.6L12.4 12.4" stroke="#8a8f9a" stroke-width="1.7"/><path d="M18.8 4.6L12.4 12.4" stroke="#d9dce2" stroke-width="0.6"/><path d="M11 11.2L13.6 13.4L12.2 15.4L7 16.6L9.4 13z" fill="#3f6fd0"/><path d="M10.8 11.4L13.4 13.6" stroke="#b8862c" stroke-width="1.3"/></svg>
<span style='left:455.90px;top:70.20px;font:7.20px/7.20px "Liberation Sans",sans-serif;color:#1f2352;transform:scaleX(0.9418);transform-origin:0 50%;'>Dar formato</span>
<span style='left:455.90px;top:78.00px;font:7.20px/7.20px "Liberation Sans",sans-serif;color:#1f2352;transform:scaleX(0.9199);transform-origin:0 50%;'>como tabla</span>
<svg style="left:489.90px;top:80.32px" width="3.4" height="2.5" viewBox="0 0 4 3"><path d="M0.2 0.3H3.8L2 2.7z" fill="#6a7488"/></svg>
<svg style="left:500.8px;top:49.6px" width="20" height="17.4" viewBox="0 0 20 17.4"><rect x="0.6" y="0.6" width="17.2" height="13.8" fill="#fbfcfe" stroke="#9aa9c4" stroke-width="0.7"/><path d="M0.6 3.4H17.8M3.4 0.6V14.4M15.4 0.6V14.4M0.6 10.6H17.8" stroke="#d3dcec" stroke-width="0.6"/><rect x="3.4" y="3.4" width="12" height="7.2" fill="#8fb0ee" stroke="#6f8fd6" stroke-width="0.5"/><path d="M18.6 5L12.2 12.6" stroke="#8a8f9a" stroke-width="1.7"/><path d="M18.6 5L12.2 12.6" stroke="#d9dce2" stroke-width="0.6"/><path d="M10.8 11.4L13.4 13.6L12 15.6L6.8 16.8L9.2 13.2z" fill="#3f6fd0"/><path d="M10.6 11.6L13.2 13.8" stroke="#b8862c" stroke-width="1.3"/></svg>
<span style='left:496.70px;top:70.20px;font:7.20px/7.20px "Liberation Sans",sans-serif;color:#1f2352;transform:scaleX(0.9002);transform-origin:0 50%;'>Estilos de</span>
<span style='left:500.90px;top:78.00px;font:7.20px/7.20px "Liberation Sans",sans-serif;color:#1f2352;transform:scaleX(0.8250);transform-origin:0 50%;'>celda</span>
<svg style="left:517.50px;top:80.32px" width="3.4" height="2.5" viewBox="0 0 4 3"><path d="M0.2 0.3H3.8L2 2.7z" fill="#6a7488"/></svg>
<svg style="left:532.8px;top:48.8px" width="11" height="9.6" viewBox="0 0 11 9.6"><rect x="0.5" y="0.5" width="3.6" height="2.4" fill="#fff" stroke="#5a6478" stroke-width="0.6"/><rect x="0.5" y="3.6" width="3.6" height="2.4" fill="#fff" stroke="#5a6478" stroke-width="0.6"/><rect x="0.5" y="6.7" width="3.6" height="2.4" fill="#fff" stroke="#5a6478" stroke-width="0.6"/><path d="M5.2 4.2L7 2.8V3.6H10.4V4.8H7V5.6z" fill="#1f2433"/></svg>
<span style='left:544.90px;top:50.00px;font:7.20px/7.20px "Liberation Sans",sans-serif;color:#1f2352;transform:scaleX(0.9422);transform-origin:0 50%;'>Insertar</span>
<svg style="left:570.20px;top:52.52px" width="3.4" height="2.5" viewBox="0 0 4 3"><path d="M0.2 0.3H3.8L2 2.7z" fill="#6a7488"/></svg>
<svg style="left:532.8px;top:61.4px" width="11" height="9.6" viewBox="0 0 11 9.6"><rect x="0.5" y="0.8" width="3.6" height="2.4" fill="#fff" stroke="#5a6478" stroke-width="0.6"/><rect x="0.5" y="3.8" width="3.6" height="2.2" fill="#9db7e4" stroke="#5a6478" stroke-width="0.6"/><rect x="0.5" y="6.7" width="3.6" height="2.4" fill="#fff" stroke="#5a6478" stroke-width="0.6"/><path d="M5.8 0.8L10 5M10 0.8L5.8 5" stroke="#e8392e" stroke-width="1.2"/></svg>
<span style='left:544.90px;top:62.60px;font:7.20px/7.20px "Liberation Sans",sans-serif;color:#1f2352;transform:scaleX(0.9036);transform-origin:0 50%;'>Eliminar</span>
<svg style="left:570.90px;top:65.12px" width="3.4" height="2.5" viewBox="0 0 4 3"><path d="M0.2 0.3H3.8L2 2.7z" fill="#6a7488"/></svg>
<svg style="left:532.6px;top:74.4px" width="11" height="9.6" viewBox="0 0 11 9.6"><rect x="0.6" y="1.4" width="9.6" height="7.6" fill="#fff" stroke="#3c4660" stroke-width="0.7"/><path d="M0.6 3.6H10.2M0.6 6.6H10.2M3.4 1.4V9M7.4 1.4V9" stroke="#7d8aa3" stroke-width="0.5"/><rect x="3.4" y="3.6" width="4" height="3" fill="#6f97e6"/><path d="M2 0.4V2M5 0.4V2M8 0.4V2" stroke="#3c4660" stroke-width="0.7"/></svg>
<span style='left:544.90px;top:75.60px;font:7.20px/7.20px "Liberation Sans",sans-serif;color:#1f2352;transform:scaleX(0.9102);transform-origin:0 50%;'>Formato</span>
<svg style="left:571.60px;top:78.12px" width="3.4" height="2.5" viewBox="0 0 4 3"><path d="M0.2 0.3H3.8L2 2.7z" fill="#6a7488"/></svg>
<span style='left:585.40px;top:48.80px;font:bold 9.20px/9.20px "Liberation Serif",serif;color:#111;transform:scaleX(1.0640);transform-origin:0 50%;'>Σ</span>
<svg style="left:595.70px;top:52.52px" width="3.4" height="2.5" viewBox="0 0 4 3"><path d="M0.2 0.3H3.8L2 2.7z" fill="#6a7488"/></svg>
<svg style="left:584.8px;top:61.6px" width="8.6" height="9.4" viewBox="0 0 8.6 9.4"><rect x="0.5" y="0.5" width="7.6" height="8.4" fill="#f4f8fd" stroke="#5f83c8" stroke-width="0.8"/><rect x="0.9" y="0.9" width="6.8" height="1.6" fill="#8fb0ee"/><path d="M3.3 3.2H5.3V5.4H6.8L4.3 8.2L1.8 5.4H3.3z" fill="#2f62d0"/></svg>
<svg style="left:594.90px;top:64.92px" width="3.4" height="2.5" viewBox="0 0 4 3"><path d="M0.2 0.3H3.8L2 2.7z" fill="#6a7488"/></svg>
<svg style="left:584.6px;top:75.4px" width="9.4" height="8.4" viewBox="0 0 9.4 8.4"><path d="M3.6 0.8L8.8 0.8L5.6 6.2H0.6z" fill="#f4f5f8" stroke="#8a90a0" stroke-width="0.6" transform="rotate(-12 4.7 3.5)"/><path d="M0.8 7.6H8.4" stroke="#2b2f3c" stroke-width="0.9"/><path d="M1.4 5.6L3.2 2.6" stroke="#c9ccd6" stroke-width="1.4"/></svg>
<svg style="left:594.90px;top:78.12px" width="3.4" height="2.5" viewBox="0 0 4 3"><path d="M0.2 0.3H3.8L2 2.7z" fill="#6a7488"/></svg>
<span style='left:607.20px;top:49.50px;font:bold 8.60px/8.60px "Liberation Serif",serif;color:#2a4fc0;transform:scaleX(0.9661);transform-origin:0 50%;'>A</span>
<span style='left:607.00px;top:57.70px;font:bold 9.40px/9.40px "Liberation Serif",serif;color:#a82820;transform:scaleX(1.0526);transform-origin:0 50%;'>Z</span>
<svg style="left:612.6px;top:51.8px" width="11.4" height="13.4" viewBox="0 0 11.4 13.4"><path d="M0.4 0.6H11L7 6.2V12.6H4.2V6.2z" fill="#9a9da3"/><path d="M0.4 0.6H11L10.2 1.8H1.2z" fill="#c6c8cc"/><path d="M5.4 6.2H7V12.6H5.4z" fill="#77797f"/></svg>
<span style='left:603.20px;top:70.20px;font:7.20px/7.20px "Liberation Sans",sans-serif;color:#1f2352;transform:scaleX(0.9313);transform-origin:0 50%;'>Ordenar</span>
<span style='left:602.20px;top:78.00px;font:7.20px/7.20px "Liberation Sans",sans-serif;color:#1f2352;transform:scaleX(0.9768);transform-origin:0 50%;'>y filtrar</span>
<svg style="left:624.80px;top:80.32px" width="3.4" height="2.5" viewBox="0 0 4 3"><path d="M0.2 0.3H3.8L2 2.7z" fill="#6a7488"/></svg>
<svg style="left:640.8px;top:50.2px" width="17.4" height="14.6" viewBox="0 0 17.4 14.6"><defs><linearGradient id="bn" x1="0" x2="1"><stop offset="0" stop-color="#a9bdea"/><stop offset="0.45" stop-color="#5f80cc"/><stop offset="1" stop-color="#2f4a96"/></linearGradient></defs><path d="M3.4 1.8Q3.4 0.5 4.8 0.5H6.2Q7.6 0.5 7.6 1.8V4L8.2 7V13.6Q8.2 14.2 7.4 14.2H1.4Q0.6 14.2 0.6 13.6V8L3.4 4z" fill="url(#bn)"/><path d="M9.8 1.8Q9.8 0.5 11.2 0.5H12.6Q14 0.5 14 1.8V4L16.8 8V13.6Q16.8 14.2 16 14.2H10Q9.2 14.2 9.2 13.6V7L9.8 4z" fill="url(#bn)"/><rect x="7.2" y="5" width="3" height="4" fill="#3c5aa8"/><path d="M0.6 9.4H8.2M9.2 9.4H16.8" stroke="#dfe7fa" stroke-width="0.6" opacity=".7"/></svg>
<span style='left:638.30px;top:70.20px;font:7.20px/7.20px "Liberation Sans",sans-serif;color:#1f2352;transform:scaleX(0.8533);transform-origin:0 50%;'>Buscar y</span>
<span style='left:631.70px;top:78.00px;font:7.20px/7.20px "Liberation Sans",sans-serif;color:#1f2352;transform:scaleX(0.8759);transform-origin:0 50%;'>seleccionar</span>
<svg style="left:665.70px;top:80.32px" width="3.4" height="2.5" viewBox="0 0 4 3"><path d="M0.2 0.3H3.8L2 2.7z" fill="#6a7488"/></svg>
<span style='left:684.20px;top:49.20px;font:bold 7.60px/7.60px "Liberation Serif",serif;color:#1c1c1c;transform:scaleX(1.0220);transform-origin:0 50%;'>ABC</span>
<svg style="left:685px;top:51.6px" width="19" height="16" viewBox="0 0 19 16"><path d="M1.6 9.2L6.6 14L17.2 1.6" fill="none" stroke="#2f55c8" stroke-width="2.6"/><path d="M1.6 9.2L6.6 14L17.2 1.6" fill="none" stroke="#5f8af0" stroke-width="1.2"/></svg>
<span style='left:677.80px;top:70.20px;font:7.20px/7.20px "Liberation Sans",sans-serif;color:#1f2352;transform:scaleX(0.9440);transform-origin:0 50%;'>Ortografía</span>
<svg style="left:690.70px;top:79.72px" width="3.4" height="2.5" viewBox="0 0 4 3"><path d="M0.2 0.3H3.8L2 2.7z" fill="#6a7488"/></svg>
<svg style="left:719.8px;top:49.6px" width="18" height="17.6" viewBox="0 0 18 17.6"><path d="M0.6 1.2H2.8L5 11.6H13.6" fill="none" stroke="#7d828c" stroke-width="1.1"/><path d="M3.6 4.4H15L13.8 10H5z" fill="#d9dce2" stroke="#7d828c" stroke-width="0.8"/><path d="M6.4 4.4V10M9 4.4V10M11.6 4.4V10M4.2 7.2H14.4" stroke="#8a8f9a" stroke-width="0.6"/><circle cx="6.2" cy="15" r="1.6" fill="#6a6f7a"/><circle cx="12.4" cy="15" r="1.6" fill="#6a6f7a"/><circle cx="11.8" cy="4.4" r="4.1" fill="#2f6fd8" stroke="#1f4fa8" stroke-width="0.5"/><path d="M9 2.6Q10.6 0.8 12.4 1.2Q13 2.6 11.6 3.6Q10.4 3.4 10.2 4.8Q9 4.4 9 2.6z M12.6 4.6Q14.4 4.2 15 5.6Q14.2 7.6 12.8 7.8Q12 6.2 12.6 4.6z" fill="#4fb848"/></svg>
<span style='left:717.00px;top:70.20px;font:7.20px/7.20px "Liberation Sans",sans-serif;color:#1f2352;transform:scaleX(0.9995);transform-origin:0 50%;'>Adquirir</span>
<svg style="left:727.10px;top:79.72px" width="3.4" height="2.5" viewBox="0 0 4 3"><path d="M0.2 0.3H3.8L2 2.7z" fill="#6a7488"/></svg>
<div style="left:799.00px;top:0.00px;width:1.00px;height:480.00px;background:#000"></div>
</body></html>
